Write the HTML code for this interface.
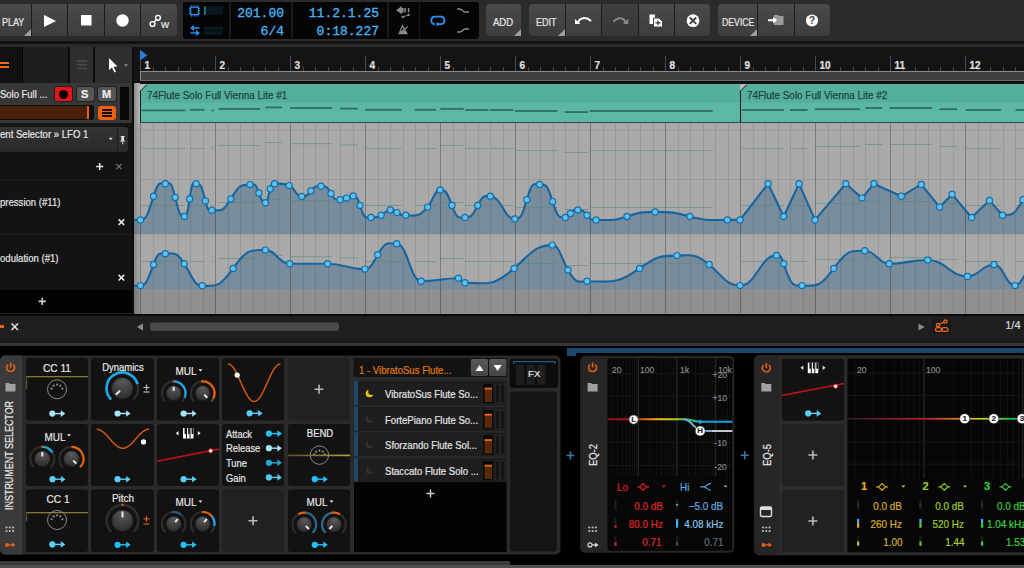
<!DOCTYPE html><html><head><meta charset="utf-8"><style>
*{margin:0;padding:0;box-sizing:border-box}
html,body{width:1024px;height:568px;overflow:hidden;background:#000;font-family:"Liberation Sans",sans-serif}
.abs{position:absolute}
.txt{position:absolute;white-space:nowrap;line-height:1;-webkit-text-stroke:0.2px currentColor}
svg{position:absolute;left:0;top:0}
</style></head><body>
<div class="abs" style="left:0px;top:0px;width:1024px;height:41px;background:#2b2b2b"></div>
<div class="abs" style="left:-4px;top:4px;width:181px;height:32px;background:linear-gradient(#4a4a4a,#3d3d3d);border-radius:4px"></div>
<div class="abs" style="left:31px;top:4px;width:1px;height:32px;background:#1c1c1c"></div>
<div class="abs" style="left:67px;top:4px;width:1px;height:32px;background:#1c1c1c"></div>
<div class="abs" style="left:104px;top:4px;width:1px;height:32px;background:#1c1c1c"></div>
<div class="abs" style="left:140px;top:4px;width:1px;height:32px;background:#1c1c1c"></div>
<div class="txt" style="left:2px;top:17.5px;font-size:10px;color:#e8e8e8;transform:scaleX(0.9);transform-origin:0 0;">PLAY</div>
<div class="abs" style="left:24px;top:29px;width:0;height:0;border-left:7px solid transparent;border-bottom:7px solid #a0a0a0"></div>
<svg style="left:0px;top:0px" width="183" height="41" viewBox="0 0 183 41"><polygon points="44,15 56,21 44,27" fill="#fff"/><rect x="81" y="15" width="10.5" height="10.5" fill="#fff"/><circle cx="122.5" cy="20.5" r="6.2" fill="#fff"/><circle cx="152.5" cy="24" r="2.4" fill="none" stroke="#fff" stroke-width="1.4"/><circle cx="158" cy="17.8" r="2.4" fill="none" stroke="#fff" stroke-width="1.4"/><line x1="154.2" y1="22.2" x2="156.3" y2="19.6" stroke="#fff" stroke-width="1.4"/></svg>
<div class="txt" style="left:160.5px;top:19.5px;font-size:9.5px;color:#f0f0f0;transform:scaleX(0.9);transform-origin:0 0;">W</div>
<div class="abs" style="left:183px;top:2px;width:296px;height:37px;background:#050505;border-radius:3px"></div>
<div class="abs" style="left:229px;top:2px;width:2px;height:37px;background:#1a1a1a"></div>
<div class="abs" style="left:291px;top:2px;width:2px;height:37px;background:#1a1a1a"></div>
<div class="abs" style="left:387px;top:2px;width:2px;height:37px;background:#1a1a1a"></div>
<div class="abs" style="left:419px;top:2px;width:1px;height:37px;background:#1a1a1a"></div>
<svg style="left:183px;top:0px" width="50" height="40" viewBox="0 0 50 40"><rect x="7.6" y="7.2" width="7.8" height="7.4" fill="none" stroke="#2a90f0" stroke-width="1.3"/><g fill="#2a90f0"><rect x="8.1" y="5.2" width="1.1" height="1.4"/><rect x="8.1" y="15.2" width="1.1" height="1.4"/><rect x="10.8" y="5.2" width="1.1" height="1.4"/><rect x="10.8" y="15.2" width="1.1" height="1.4"/><rect x="13.5" y="5.2" width="1.1" height="1.4"/><rect x="13.5" y="15.2" width="1.1" height="1.4"/><rect x="5.9" y="7.7" width="1.4" height="1.1"/><rect x="15.7" y="7.7" width="1.4" height="1.1"/><rect x="5.9" y="10.3" width="1.4" height="1.1"/><rect x="15.7" y="10.3" width="1.4" height="1.1"/><rect x="5.9" y="12.9" width="1.4" height="1.1"/><rect x="15.7" y="12.9" width="1.4" height="1.1"/></g><rect x="21" y="6.3" width="19" height="8.5" fill="#0a1820"/><rect x="21" y="6.3" width="1.8" height="8.5" fill="#237a78"/><rect x="21" y="26.4" width="19" height="3.6" fill="#0a1820"/><rect x="21" y="30.8" width="19" height="4" fill="#0a1820"/><path d="M7 28 L11 25 L11 27.2 L16.5 27.2 L16.5 28.8 L11 28.8 L11 31 Z" fill="#2a90f0"/><path d="M17 33 L13 36 L13 33.8 L7.5 33.8 L7.5 32.2 L13 32.2 L13 30 Z" fill="#2a90f0"/></svg>
<div class="txt" style="right:740px;top:6.8px;font-size:13px;color:#4ab0f0;font-family:'Liberation Mono',monospace;-webkit-text-stroke:0.35px">201.00</div>
<div class="txt" style="right:740px;top:25px;font-size:13px;color:#4ab0f0;font-family:'Liberation Mono',monospace;-webkit-text-stroke:0.35px">6/4</div>
<div class="txt" style="right:645px;top:6.8px;font-size:13px;color:#4ab0f0;font-family:'Liberation Mono',monospace;-webkit-text-stroke:0.35px">11.2.1.25</div>
<div class="txt" style="right:645px;top:25px;font-size:13px;color:#4ab0f0;font-family:'Liberation Mono',monospace;-webkit-text-stroke:0.35px">0:18.227</div>
<svg style="left:387px;top:0px" width="93" height="40" viewBox="0 0 93 40"><path d="M9.1 10.2 L14.8 6.1 L14.8 8 L16.6 8 L16.6 12.5 L14.8 12.5 L14.8 14.3 Z" fill="#8a8a8a"/><rect x="17.3" y="8" width="1.5" height="4.5" fill="#8a8a8a"/><rect x="20.8" y="8" width="1.5" height="4.5" fill="#8a8a8a"/><circle cx="15.8" cy="16.9" r="1.2" fill="#8a8a8a"/><circle cx="21.6" cy="15" r="1.2" fill="#8a8a8a"/><line x1="15.8" y1="16.9" x2="21.6" y2="15" stroke="#8a8a8a" stroke-width="0.9"/><path d="M15.4 25.6 L19.9 33.6 L12.2 33.6 Z" fill="none" stroke="#8a8a8a" stroke-width="1.2"/><path d="M13.4 30.8 L18.4 30.8 L20 33.6 L12 33.6 Z" fill="#8a8a8a"/><line x1="15.4" y1="31" x2="20.8" y2="26.4" stroke="#8a8a8a" stroke-width="1.2"/><path d="M48 24.2 L47.3 24.2 A3.9 3.9 0 0 1 47.3 16.6 L54.4 16.6 A3.9 3.9 0 0 1 54.4 24.2 L51 24.2" fill="none" stroke="#2a90f0" stroke-width="1.8"/><path d="M49.5 21.8 L53 24.2 L49.5 26.6 Z" fill="#2a90f0"/><path d="M70 9 L73 9 C75 9 76 12 78 12 L82 12" fill="none" stroke="#8a8a8a" stroke-width="1.3"/><path d="M70 32 L73 32 C75 32 76 29 78 29 L82 29" fill="none" stroke="#8a8a8a" stroke-width="1.3"/></svg>
<div class="abs" style="left:486px;top:4px;width:35px;height:32px;background:linear-gradient(#4a4a4a,#3d3d3d);border-radius:4px"></div>
<div class="txt" style="left:493px;top:17.5px;font-size:10px;color:#e8e8e8;transform:scaleX(0.95);transform-origin:0 0;">ADD</div>
<div class="abs" style="left:514px;top:29px;width:0;height:0;border-left:7px solid transparent;border-bottom:7px solid #a0a0a0"></div>
<div class="abs" style="left:529px;top:4px;width:181px;height:32px;background:linear-gradient(#4a4a4a,#3d3d3d);border-radius:4px"></div>
<div class="abs" style="left:601px;top:4px;width:37px;height:32px;background:linear-gradient(#404040,#373737)"></div>
<div class="abs" style="left:565px;top:4px;width:1px;height:32px;background:#1c1c1c"></div>
<div class="abs" style="left:601px;top:4px;width:1px;height:32px;background:#1c1c1c"></div>
<div class="abs" style="left:638px;top:4px;width:1px;height:32px;background:#1c1c1c"></div>
<div class="abs" style="left:674px;top:4px;width:1px;height:32px;background:#1c1c1c"></div>
<div class="txt" style="left:535.5px;top:17.5px;font-size:10px;color:#e8e8e8;transform:scaleX(0.9);transform-origin:0 0;">EDIT</div>
<div class="abs" style="left:558px;top:29px;width:0;height:0;border-left:7px solid transparent;border-bottom:7px solid #a0a0a0"></div>
<svg style="left:529px;top:0px" width="181" height="41" viewBox="0 0 181 41"><path d="M49 23 C50 18 57 16 62 21" fill="none" stroke="#fff" stroke-width="2"/><path d="M46 19 L51.5 24 L46 24 Z" fill="#fff"/><path d="M84.5 21.5 C89 16.5 95 17.5 96.5 22.5" fill="none" stroke="#8a8a8a" stroke-width="2"/><path d="M99.3 18.8 L94 24 L99.3 24 Z" fill="#8a8a8a"/><path d="M120.5 14.5 L126 14.5 L126 24 L120.5 24 Z" fill="#fff"/><path d="M124.5 18 L130 18 L133.5 21.5 L133.5 27 L124.5 27 Z" fill="#fff" stroke="#444" stroke-width="1"/><path d="M126.5 22.8 L131.5 22.8 M129 20.5 L129 25" stroke="#333" stroke-width="1.2"/><circle cx="164" cy="20.7" r="6.4" fill="#fff"/><path d="M160.8 17.5 L167.2 23.9 M167.2 17.5 L160.8 23.9" stroke="#3c3c3c" stroke-width="1.8"/></svg>
<div class="abs" style="left:718px;top:4px;width:112px;height:32px;background:linear-gradient(#4a4a4a,#3d3d3d);border-radius:4px"></div>
<div class="abs" style="left:757px;top:4px;width:1px;height:32px;background:#1c1c1c"></div>
<div class="abs" style="left:794px;top:4px;width:1px;height:32px;background:#1c1c1c"></div>
<div class="txt" style="left:721.5px;top:17.5px;font-size:10px;color:#e8e8e8;transform:scaleX(0.87);transform-origin:0 0;">DEVICE</div>
<div class="abs" style="left:750px;top:29px;width:0;height:0;border-left:7px solid transparent;border-bottom:7px solid #a0a0a0"></div>
<svg style="left:718px;top:0px" width="112" height="41" viewBox="0 0 112 41"><path d="M56 15 L60 15 L61 16 L65.5 16 L65.5 25 L56 25 Z" fill="#9a9a9a"/><path d="M50 19.2 L55 19.2 L55 17 L59 20.2 L55 23.4 L55 21.2 L50 21.2 Z" fill="#fff"/><circle cx="94" cy="20.5" r="6.1" fill="#fff"/><text x="94" y="24.3" font-family="Liberation Sans" font-weight="bold" font-size="10" fill="#3c3c3c" text-anchor="middle">?</text></svg>
<div class="abs" style="left:0px;top:41px;width:1024px;height:3px;background:#121212"></div>
<div class="abs" style="left:0px;top:44px;width:1024px;height:3px;background:#2a2a2a"></div>
<div class="abs" style="left:0px;top:47px;width:22px;height:36px;background:#111"></div>
<div class="abs" style="left:23px;top:47px;width:45px;height:36px;background:#1e1e1e"></div>
<div class="abs" style="left:68px;top:47px;width:2px;height:36px;background:#0c0c0c"></div>
<div class="abs" style="left:70px;top:47px;width:23px;height:36px;background:#2e2e2e"></div>
<div class="abs" style="left:93px;top:47px;width:2px;height:36px;background:#0c0c0c"></div>
<div class="abs" style="left:95px;top:47px;width:37px;height:36px;background:#2e2e2e"></div>
<div class="abs" style="left:132px;top:47px;width:2px;height:36px;background:#0c0c0c"></div>
<div class="abs" style="left:0px;top:62px;width:9px;height:2px;background:#f06a10"></div>
<div class="abs" style="left:0px;top:66px;width:9px;height:2px;background:#f06a10"></div>
<svg style="left:70px;top:47px" width="62" height="36" viewBox="0 0 62 36"><g fill="#4a4a4a"><rect x="7" y="13" width="10" height="1.8"/><rect x="7" y="16.8" width="10" height="1.8"/><rect x="7" y="20.6" width="6" height="1.8"/><path d="M14 19.8 L17.8 21.6 L14 23.4 Z"/></g><path d="M39 11 L39 23 L42 20.5 L44.5 25.5 L46 24.8 L43.5 19.8 L47.5 19.5 Z" fill="#fff"/><path d="M54 17.3 L58 17.3 L56 19.8 Z" fill="#888"/></svg>
<div class="abs" style="left:134px;top:47px;width:890px;height:36px;background:#141414"></div>
<svg style="left:0px;top:0px" width="1024" height="90" viewBox="0 0 1024 90"><rect x="140" y="56" width="1" height="15" fill="#4a4a4a"/><rect x="153" y="67" width="1" height="4" fill="#4a4a4a"/><rect x="165" y="67" width="1" height="4" fill="#4a4a4a"/><rect x="178" y="67" width="1" height="4" fill="#4a4a4a"/><rect x="190" y="67" width="1" height="4" fill="#4a4a4a"/><rect x="203" y="67" width="1" height="4" fill="#4a4a4a"/><rect x="215" y="56" width="1" height="15" fill="#4a4a4a"/><rect x="228" y="67" width="1" height="4" fill="#4a4a4a"/><rect x="240" y="67" width="1" height="4" fill="#4a4a4a"/><rect x="253" y="67" width="1" height="4" fill="#4a4a4a"/><rect x="265" y="67" width="1" height="4" fill="#4a4a4a"/><rect x="278" y="67" width="1" height="4" fill="#4a4a4a"/><rect x="290" y="56" width="1" height="15" fill="#4a4a4a"/><rect x="303" y="67" width="1" height="4" fill="#4a4a4a"/><rect x="315" y="67" width="1" height="4" fill="#4a4a4a"/><rect x="328" y="67" width="1" height="4" fill="#4a4a4a"/><rect x="340" y="67" width="1" height="4" fill="#4a4a4a"/><rect x="353" y="67" width="1" height="4" fill="#4a4a4a"/><rect x="365" y="56" width="1" height="15" fill="#4a4a4a"/><rect x="378" y="67" width="1" height="4" fill="#4a4a4a"/><rect x="390" y="67" width="1" height="4" fill="#4a4a4a"/><rect x="403" y="67" width="1" height="4" fill="#4a4a4a"/><rect x="415" y="67" width="1" height="4" fill="#4a4a4a"/><rect x="428" y="67" width="1" height="4" fill="#4a4a4a"/><rect x="440" y="56" width="1" height="15" fill="#4a4a4a"/><rect x="453" y="67" width="1" height="4" fill="#4a4a4a"/><rect x="465" y="67" width="1" height="4" fill="#4a4a4a"/><rect x="478" y="67" width="1" height="4" fill="#4a4a4a"/><rect x="490" y="67" width="1" height="4" fill="#4a4a4a"/><rect x="503" y="67" width="1" height="4" fill="#4a4a4a"/><rect x="515" y="56" width="1" height="15" fill="#4a4a4a"/><rect x="528" y="67" width="1" height="4" fill="#4a4a4a"/><rect x="540" y="67" width="1" height="4" fill="#4a4a4a"/><rect x="553" y="67" width="1" height="4" fill="#4a4a4a"/><rect x="565" y="67" width="1" height="4" fill="#4a4a4a"/><rect x="578" y="67" width="1" height="4" fill="#4a4a4a"/><rect x="590" y="56" width="1" height="15" fill="#4a4a4a"/><rect x="603" y="67" width="1" height="4" fill="#4a4a4a"/><rect x="615" y="67" width="1" height="4" fill="#4a4a4a"/><rect x="628" y="67" width="1" height="4" fill="#4a4a4a"/><rect x="640" y="67" width="1" height="4" fill="#4a4a4a"/><rect x="653" y="67" width="1" height="4" fill="#4a4a4a"/><rect x="665" y="56" width="1" height="15" fill="#4a4a4a"/><rect x="678" y="67" width="1" height="4" fill="#4a4a4a"/><rect x="690" y="67" width="1" height="4" fill="#4a4a4a"/><rect x="703" y="67" width="1" height="4" fill="#4a4a4a"/><rect x="715" y="67" width="1" height="4" fill="#4a4a4a"/><rect x="728" y="67" width="1" height="4" fill="#4a4a4a"/><rect x="740" y="56" width="1" height="15" fill="#4a4a4a"/><rect x="753" y="67" width="1" height="4" fill="#4a4a4a"/><rect x="765" y="67" width="1" height="4" fill="#4a4a4a"/><rect x="778" y="67" width="1" height="4" fill="#4a4a4a"/><rect x="790" y="67" width="1" height="4" fill="#4a4a4a"/><rect x="803" y="67" width="1" height="4" fill="#4a4a4a"/><rect x="815" y="56" width="1" height="15" fill="#4a4a4a"/><rect x="828" y="67" width="1" height="4" fill="#4a4a4a"/><rect x="840" y="67" width="1" height="4" fill="#4a4a4a"/><rect x="853" y="67" width="1" height="4" fill="#4a4a4a"/><rect x="865" y="67" width="1" height="4" fill="#4a4a4a"/><rect x="878" y="67" width="1" height="4" fill="#4a4a4a"/><rect x="890" y="56" width="1" height="15" fill="#4a4a4a"/><rect x="903" y="67" width="1" height="4" fill="#4a4a4a"/><rect x="915" y="67" width="1" height="4" fill="#4a4a4a"/><rect x="928" y="67" width="1" height="4" fill="#4a4a4a"/><rect x="940" y="67" width="1" height="4" fill="#4a4a4a"/><rect x="953" y="67" width="1" height="4" fill="#4a4a4a"/><rect x="965" y="56" width="1" height="15" fill="#4a4a4a"/><rect x="978" y="67" width="1" height="4" fill="#4a4a4a"/><rect x="990" y="67" width="1" height="4" fill="#4a4a4a"/><rect x="1003" y="67" width="1" height="4" fill="#4a4a4a"/><rect x="1015" y="67" width="1" height="4" fill="#4a4a4a"/><rect x="140" y="71" width="884" height="10" fill="#404040"/><rect x="140" y="71" width="884" height="1" fill="#8a8a8a"/><rect x="140" y="71" width="1" height="10" fill="#8a8a8a"/><rect x="140" y="80" width="884" height="1" fill="#6a6a6a"/><path d="M140 50 L147.5 55.3 L140 60.6 Z" fill="#2a7ce0"/></svg>
<div class="txt" style="left:144.5px;top:61px;font-size:10px;color:#e0e0e0;font-weight:bold">1</div>
<div class="txt" style="left:219.5px;top:61px;font-size:10px;color:#e0e0e0;font-weight:bold">2</div>
<div class="txt" style="left:294.5px;top:61px;font-size:10px;color:#e0e0e0;font-weight:bold">3</div>
<div class="txt" style="left:369.5px;top:61px;font-size:10px;color:#e0e0e0;font-weight:bold">4</div>
<div class="txt" style="left:444.5px;top:61px;font-size:10px;color:#e0e0e0;font-weight:bold">5</div>
<div class="txt" style="left:519.5px;top:61px;font-size:10px;color:#e0e0e0;font-weight:bold">6</div>
<div class="txt" style="left:594.5px;top:61px;font-size:10px;color:#e0e0e0;font-weight:bold">7</div>
<div class="txt" style="left:669.5px;top:61px;font-size:10px;color:#e0e0e0;font-weight:bold">8</div>
<div class="txt" style="left:744.5px;top:61px;font-size:10px;color:#e0e0e0;font-weight:bold">9</div>
<div class="txt" style="left:819.5px;top:61px;font-size:10px;color:#e0e0e0;font-weight:bold">10</div>
<div class="txt" style="left:894.5px;top:61px;font-size:10px;color:#e0e0e0;font-weight:bold">11</div>
<div class="txt" style="left:969.5px;top:61px;font-size:10px;color:#e0e0e0;font-weight:bold">12</div>
<div class="abs" style="left:134px;top:81px;width:890px;height:3px;background:#0c0c0c"></div>
<div class="abs" style="left:0px;top:83px;width:132px;height:40px;background:#373737"></div>
<div class="abs" style="left:132px;top:83px;width:2px;height:40px;background:#0c0c0c"></div>
<div class="txt" style="left:0px;top:89px;font-size:11px;color:#e6e6e6;transform:scaleX(0.86);transform-origin:0 0;">Solo Full ...</div>
<div class="abs" style="left:55px;top:87px;width:17px;height:14px;background:#e8141c;border-radius:2px;box-shadow:0 0 0 1px #222"></div>
<div class="abs" style="left:59px;top:89.5px;width:9px;height:9px;border-radius:50%;background:#000"></div>
<div class="abs" style="left:77px;top:87px;width:17px;height:14px;background:#555;border-radius:2px;box-shadow:0 0 0 1px #222"></div>
<div class="abs" style="left:98px;top:87px;width:18px;height:14px;background:#555;border-radius:2px;box-shadow:0 0 0 1px #222"></div>
<div class="txt" style="left:81px;top:89px;font-size:11px;color:#eee;font-weight:bold">S</div>
<div class="txt" style="left:102px;top:89px;font-size:11px;color:#eee;font-weight:bold">M</div>
<div class="abs" style="left:120px;top:87px;width:9px;height:33px;background:#080808"></div>
<div class="abs" style="left:0px;top:105px;width:94px;height:15px;background:#0a0a0a;border-radius:0 3px 3px 0"></div>
<div class="abs" style="left:0px;top:106px;width:88px;height:13px;background:#4a2008"></div>
<div class="abs" style="left:87px;top:106px;width:1.5px;height:13px;background:#e86010"></div>
<div class="abs" style="left:98px;top:106px;width:18px;height:14px;background:#f06010;border-radius:3px"></div>
<div class="abs" style="left:102px;top:109px;width:10px;height:1.6px;background:#111"></div>
<div class="abs" style="left:102px;top:112px;width:10px;height:1.6px;background:#111"></div>
<div class="abs" style="left:102px;top:115px;width:10px;height:1.6px;background:#111"></div>
<div class="abs" style="left:134px;top:83px;width:6px;height:40px;background:linear-gradient(90deg,#8a8a8a,#b8b8b8)"></div>
<svg style="left:0px;top:0px" width="1024" height="130" viewBox="0 0 1024 130"><rect x="140" y="82" width="884" height="2" fill="#111"/><polygon points="140,84 147,84 140,91" fill="#b8b8b8"/><polygon points="140,91 147,84 740,84 740,122 140,122" fill="#5cb8a3"/><rect x="140" y="84" width="600" height="19" fill="#55b09b" clip-path="none"/><polygon points="140,84 147,84 140,91" fill="#b8b8b8"/><line x1="140.5" y1="91" x2="140.5" y2="122" stroke="#1a1a1a" stroke-width="1"/><line x1="140" y1="91.5" x2="147" y2="84.5" stroke="#1a1a1a" stroke-width="1"/><rect x="141.5" y="109.5" width="43.9" height="1.8" fill="#2e6e60"/><rect x="189.8" y="108.9" width="14.7" height="1.8" fill="#2e6e60"/><rect x="211.8" y="109.5" width="2.0" height="1.8" fill="#2e6e60"/><rect x="218.5" y="108.0" width="41.6" height="1.8" fill="#2e6e60"/><rect x="265.4" y="106.5" width="16.7" height="1.8" fill="#2e6e60"/><rect x="290" y="107.1" width="42.0" height="1.8" fill="#2e6e60"/><rect x="340.1" y="107.7" width="17.6" height="1.8" fill="#2e6e60"/><rect x="365" y="108.9" width="36.6" height="1.8" fill="#2e6e60"/><rect x="414.5" y="108.9" width="21.5" height="1.8" fill="#2e6e60"/><rect x="440.3" y="108.0" width="23.4" height="1.8" fill="#2e6e60"/><rect x="465.2" y="109.1" width="23.4" height="1.8" fill="#2e6e60"/><rect x="490" y="109.1" width="23.5" height="1.8" fill="#2e6e60"/><rect x="515" y="110.1" width="42.5" height="1.8" fill="#2e6e60"/><rect x="564.8" y="111.2" width="23.4" height="1.8" fill="#2e6e60"/><rect x="589.7" y="110.1" width="123.0" height="1.8" fill="#2e6e60"/><polygon points="740,84 747,84 740,91" fill="#b8b8b8"/><polygon points="740,91 747,84 1024,84 1024,122 740,122" fill="#5cb8a3"/><rect x="740" y="84" width="284" height="19" fill="#55b09b" clip-path="none"/><polygon points="740,84 747,84 740,91" fill="#b8b8b8"/><line x1="740.5" y1="91" x2="740.5" y2="122" stroke="#1a1a1a" stroke-width="1"/><line x1="740" y1="91.5" x2="747" y2="84.5" stroke="#1a1a1a" stroke-width="1"/><rect x="741.6" y="109.1" width="42.4" height="1.8" fill="#2e6e60"/><rect x="790" y="109.1" width="17.5" height="1.8" fill="#2e6e60"/><rect x="814.8" y="108.3" width="45.4" height="1.8" fill="#2e6e60"/><rect x="865.2" y="107.1" width="17.0" height="1.8" fill="#2e6e60"/><rect x="889.5" y="107.1" width="42.5" height="1.8" fill="#2e6e60"/><rect x="939.4" y="108.3" width="17.6" height="1.8" fill="#2e6e60"/><rect x="965.7" y="109.1" width="35.2" height="1.8" fill="#2e6e60"/><rect x="1015.5" y="109.1" width="8.5" height="1.8" fill="#2e6e60"/><rect x="140" y="122" width="884" height="1" fill="#2a4a44"/></svg>
<div class="txt" style="left:147px;top:90px;font-size:11px;color:#1b4640;transform:scaleX(0.9);transform-origin:0 0;-webkit-text-stroke:0.25px #1b4640">74Flute Solo Full Vienna Lite #1</div>
<div class="txt" style="left:747px;top:90px;font-size:11px;color:#1b4640;transform:scaleX(0.9);transform-origin:0 0;-webkit-text-stroke:0.25px #1b4640">74Flute Solo Full Vienna Lite #2</div>
<div class="abs" style="left:0px;top:123px;width:132px;height:3.5px;background:#151515"></div>
<div class="abs" style="left:0px;top:126.5px;width:132px;height:163.5px;background:#131313"></div>
<div class="abs" style="left:0px;top:126.5px;width:128px;height:25.5px;background:linear-gradient(#343434,#2a2a2a);border-radius:0 3px 3px 0"></div>
<div class="abs" style="left:116.5px;top:126.5px;width:1px;height:25.5px;background:#1e1e1e"></div>
<div class="txt" style="left:0px;top:128.5px;font-size:11px;color:#e6e6e6;transform:scaleX(0.87);transform-origin:0 0;">ent Selector &raquo; LFO 1</div>
<div class="abs" style="left:0px;top:179.5px;width:132px;height:1px;background:#1d1d1d"></div>
<div class="abs" style="left:0px;top:234px;width:132px;height:1px;background:#1d1d1d"></div>
<div class="abs" style="left:0px;top:290px;width:132px;height:23.5px;background:#030303"></div>
<div class="abs" style="left:0px;top:313px;width:132px;height:1px;background:#202020"></div>
<div class="txt" style="left:0px;top:196.5px;font-size:11px;color:#e6e6e6;transform:scaleX(0.87);transform-origin:0 0;">pression (#11)</div>
<div class="txt" style="left:0px;top:252.5px;font-size:11px;color:#e6e6e6;transform:scaleX(0.87);transform-origin:0 0;">odulation (#1)</div>
<svg style="left:0px;top:120px" width="134" height="200" viewBox="0 0 134 200"><path d="M108.7 17.8 L112.8 17.8 L110.75 20.3 Z" fill="#ddd"/><path d="M120.3 16 L125 16 L124 17.3 L124 20 L125.6 21.5 L119.7 21.5 L121.3 20 L121.3 17.3 Z" fill="#ddd"/><rect x="122.2" y="21.5" width="1" height="2.7" fill="#ddd"/><path d="M96.2 46.5 L103.2 46.5 M99.7 43 L99.7 50" stroke="#eee" stroke-width="1.5"/><path d="M116.2 43.8 L121.6 49.2 M121.6 43.8 L116.2 49.2" stroke="#777" stroke-width="1.2"/><path d="M118.6 99.4 L124.2 105 M124.2 99.4 L118.6 105" stroke="#eee" stroke-width="1.5"/><path d="M118.6 154.9 L124.2 160.5 M124.2 154.9 L118.6 160.5" stroke="#eee" stroke-width="1.5"/><path d="M38.5 181.4 L45.8 181.4 M42.15 177.8 L42.15 185" stroke="#ccc" stroke-width="1.6"/></svg>
<div class="abs" style="left:132px;top:123px;width:2px;height:192px;background:#0c0c0c"></div>
<svg style="left:0px;top:0px" width="1024" height="320" viewBox="0 0 1024 320"><defs><linearGradient id="gut" x1="0" x2="1"><stop offset="0" stop-color="#8c8c8c"/><stop offset="1" stop-color="#a8a8a8"/></linearGradient><clipPath id="gc"><rect x="134" y="123" width="890" height="191"/></clipPath></defs><rect x="140" y="123" width="884" height="191" fill="#a9a9a9"/><rect x="134" y="123" width="6" height="191" fill="url(#gut)"/><rect x="134" y="289.5" width="890" height="25" fill="#000" fill-opacity="0.15"/><g clip-path="url(#gc)"><path d="M134.0 219.9 C136.9 219.9 137.5 219.9 140.4 219.9 C146.3 219.9 147.6 215.2 153.5 196.3 C158.8 179.3 160.0 183.7 165.3 183.7 C169.8 183.7 170.7 178.9 175.2 197.5 C179.3 214.6 180.2 216.5 184.3 216.5 C186.7 216.5 187.2 215.3 189.6 199.0 C192.6 178.6 193.2 183.7 196.2 183.7 C200.3 183.7 201.3 184.0 205.4 200.9 C208.3 212.7 208.9 210.3 211.8 210.3 C220.4 210.3 222.2 213.2 230.8 199.0 C239.4 184.7 241.4 184.6 250.0 184.6 C254.0 184.6 254.9 181.7 258.9 192.9 C261.8 201.1 262.5 202.7 265.4 202.7 C267.6 202.7 268.0 197.0 270.2 189.0 C272.1 181.8 272.6 183.7 274.5 183.7 C281.1 183.7 282.5 183.0 289.1 185.6 C294.8 187.8 296.0 196.5 301.7 196.5 C305.8 196.5 306.8 196.4 310.9 191.0 C315.4 185.0 316.5 186.3 321.0 186.3 C325.5 186.3 326.5 185.5 331.0 193.4 C335.1 200.6 336.0 199.7 340.1 199.7 C343.0 199.7 343.6 200.1 346.5 198.1 C349.5 196.0 350.2 195.9 353.2 195.9 C356.3 195.9 356.9 196.0 360.0 205.5 C364.9 220.8 366.1 217.4 371.0 217.4 C375.5 217.4 376.6 218.1 381.1 215.3 C385.2 212.7 386.2 210.0 390.3 210.0 C393.3 210.0 393.9 210.0 396.9 212.6 C400.9 216.1 401.8 215.3 405.8 215.3 C415.6 215.3 417.8 218.2 427.6 207.1 C433.2 200.8 434.5 189.9 440.1 189.9 C445.5 189.9 446.6 191.0 452.0 205.5 C457.8 221.3 459.1 217.4 464.9 217.4 C470.7 217.4 471.9 217.3 477.7 205.5 C483.4 193.9 484.6 196.3 490.3 196.3 C501.3 196.3 503.8 219.0 514.8 219.0 C520.2 219.0 521.4 218.2 526.8 199.7 C532.6 179.9 533.8 184.4 539.6 184.4 C545.5 184.4 546.8 182.8 552.6 201.6 C558.3 219.8 559.5 217.4 565.2 217.4 C567.6 217.4 568.1 216.9 570.5 213.5 C573.8 208.8 574.5 210.0 577.8 210.0 C581.9 210.0 582.9 209.7 587.0 215.3 C591.1 220.8 592.0 219.9 596.1 219.9 C610.0 219.9 613.1 221.1 627.0 216.5 C639.6 212.3 642.5 211.9 655.1 211.9 C670.8 211.9 674.2 212.3 689.9 216.5 C706.8 221.0 710.5 219.9 727.4 219.9 C733.1 219.9 734.3 219.9 740.0 219.9 L768.1 183.7 L783.7 216.5 L799.0 183.7 L815.0 219.9 L845.8 183.7 L862.0 198.1 L873.9 183.7 L901.3 196.3 L921.3 184.4 L939.6 207.1 L952.1 194.3 L971.6 217.4 L989.4 200.4 L1002.5 215.3 C1011.7 215.3 1013.8 216.0 1023.0 199.7 C1026.2 194.1 1026.8 195.0 1030.0 195.0 L1030 234.2 L134 234.2 Z" fill="#35658a" fill-opacity="0.42"/><path d="M134.0 285.6 C136.9 285.6 137.5 285.6 140.4 285.6 C146.3 285.6 147.6 280.5 153.5 264.5 C158.8 250.1 160.0 253.8 165.3 253.8 C173.9 253.8 175.8 250.3 184.3 263.8 C192.4 276.5 194.1 285.8 202.2 285.8 C216.1 285.8 219.2 288.0 233.1 268.4 C247.6 247.9 250.9 250.1 265.4 250.1 C276.3 250.1 278.7 263.8 289.6 263.8 C306.7 263.8 310.4 263.8 327.5 263.8 C344.3 263.8 348.1 269.1 364.9 269.1 C370.7 269.1 371.9 264.7 377.7 254.7 C386.2 239.8 388.1 243.7 396.7 243.7 C407.7 243.7 410.1 281.2 421.1 281.2 C437.9 281.2 441.6 278.2 458.4 278.2 C461.3 278.2 462.0 282.8 464.9 282.8 C487.0 282.8 492.0 287.8 514.1 268.4 C531.2 253.3 535.1 245.1 552.2 245.1 C559.3 245.1 560.9 257.4 568.0 270.0 C576.5 285.1 578.5 281.2 587.0 281.2 C610.7 281.2 615.9 285.4 639.6 268.4 C656.4 256.3 660.1 255.6 676.9 255.6 C691.4 255.6 694.6 252.5 709.1 264.5 C723.0 276.0 726.1 285.6 740.0 285.6 C756.5 285.6 760.1 255.4 776.6 255.4 C779.8 255.4 780.5 254.3 783.7 263.8 C791.9 288.2 793.8 285.6 802.0 285.6 C816.3 285.6 819.5 288.2 833.8 268.4 C847.8 249.1 850.8 250.8 864.8 250.8 C875.8 250.8 878.2 263.8 889.2 263.8 C906.5 263.8 910.4 260.0 927.7 260.0 C945.6 260.0 949.6 276.4 967.5 276.4 C979.4 276.4 982.1 264.5 994.0 264.5 C1003.5 264.5 1005.6 285.6 1015.1 285.6 C1021.8 285.6 1023.3 272.0 1030.0 272.0 L1030 289.5 L134 289.5 Z" fill="#35658a" fill-opacity="0.42"/><rect x="140" y="123" width="1" height="191" fill="#000" fill-opacity="0.28"/><rect x="153" y="123" width="1" height="191" fill="#000" fill-opacity="0.09"/><rect x="165" y="123" width="1" height="191" fill="#000" fill-opacity="0.09"/><rect x="178" y="123" width="1" height="191" fill="#000" fill-opacity="0.09"/><rect x="190" y="123" width="1" height="191" fill="#000" fill-opacity="0.09"/><rect x="203" y="123" width="1" height="191" fill="#000" fill-opacity="0.09"/><rect x="215" y="123" width="1" height="191" fill="#000" fill-opacity="0.28"/><rect x="228" y="123" width="1" height="191" fill="#000" fill-opacity="0.09"/><rect x="240" y="123" width="1" height="191" fill="#000" fill-opacity="0.09"/><rect x="253" y="123" width="1" height="191" fill="#000" fill-opacity="0.09"/><rect x="265" y="123" width="1" height="191" fill="#000" fill-opacity="0.09"/><rect x="278" y="123" width="1" height="191" fill="#000" fill-opacity="0.09"/><rect x="290" y="123" width="1" height="191" fill="#000" fill-opacity="0.28"/><rect x="303" y="123" width="1" height="191" fill="#000" fill-opacity="0.09"/><rect x="315" y="123" width="1" height="191" fill="#000" fill-opacity="0.09"/><rect x="328" y="123" width="1" height="191" fill="#000" fill-opacity="0.09"/><rect x="340" y="123" width="1" height="191" fill="#000" fill-opacity="0.09"/><rect x="353" y="123" width="1" height="191" fill="#000" fill-opacity="0.09"/><rect x="365" y="123" width="1" height="191" fill="#000" fill-opacity="0.28"/><rect x="378" y="123" width="1" height="191" fill="#000" fill-opacity="0.09"/><rect x="390" y="123" width="1" height="191" fill="#000" fill-opacity="0.09"/><rect x="403" y="123" width="1" height="191" fill="#000" fill-opacity="0.09"/><rect x="415" y="123" width="1" height="191" fill="#000" fill-opacity="0.09"/><rect x="428" y="123" width="1" height="191" fill="#000" fill-opacity="0.09"/><rect x="440" y="123" width="1" height="191" fill="#000" fill-opacity="0.28"/><rect x="453" y="123" width="1" height="191" fill="#000" fill-opacity="0.09"/><rect x="465" y="123" width="1" height="191" fill="#000" fill-opacity="0.09"/><rect x="478" y="123" width="1" height="191" fill="#000" fill-opacity="0.09"/><rect x="490" y="123" width="1" height="191" fill="#000" fill-opacity="0.09"/><rect x="503" y="123" width="1" height="191" fill="#000" fill-opacity="0.09"/><rect x="515" y="123" width="1" height="191" fill="#000" fill-opacity="0.28"/><rect x="528" y="123" width="1" height="191" fill="#000" fill-opacity="0.09"/><rect x="540" y="123" width="1" height="191" fill="#000" fill-opacity="0.09"/><rect x="553" y="123" width="1" height="191" fill="#000" fill-opacity="0.09"/><rect x="565" y="123" width="1" height="191" fill="#000" fill-opacity="0.09"/><rect x="578" y="123" width="1" height="191" fill="#000" fill-opacity="0.09"/><rect x="590" y="123" width="1" height="191" fill="#000" fill-opacity="0.28"/><rect x="603" y="123" width="1" height="191" fill="#000" fill-opacity="0.09"/><rect x="615" y="123" width="1" height="191" fill="#000" fill-opacity="0.09"/><rect x="628" y="123" width="1" height="191" fill="#000" fill-opacity="0.09"/><rect x="640" y="123" width="1" height="191" fill="#000" fill-opacity="0.09"/><rect x="653" y="123" width="1" height="191" fill="#000" fill-opacity="0.09"/><rect x="665" y="123" width="1" height="191" fill="#000" fill-opacity="0.28"/><rect x="678" y="123" width="1" height="191" fill="#000" fill-opacity="0.09"/><rect x="690" y="123" width="1" height="191" fill="#000" fill-opacity="0.09"/><rect x="703" y="123" width="1" height="191" fill="#000" fill-opacity="0.09"/><rect x="715" y="123" width="1" height="191" fill="#000" fill-opacity="0.09"/><rect x="728" y="123" width="1" height="191" fill="#000" fill-opacity="0.09"/><rect x="740" y="123" width="1" height="191" fill="#000" fill-opacity="0.28"/><rect x="753" y="123" width="1" height="191" fill="#000" fill-opacity="0.09"/><rect x="765" y="123" width="1" height="191" fill="#000" fill-opacity="0.09"/><rect x="778" y="123" width="1" height="191" fill="#000" fill-opacity="0.09"/><rect x="790" y="123" width="1" height="191" fill="#000" fill-opacity="0.09"/><rect x="803" y="123" width="1" height="191" fill="#000" fill-opacity="0.09"/><rect x="815" y="123" width="1" height="191" fill="#000" fill-opacity="0.28"/><rect x="828" y="123" width="1" height="191" fill="#000" fill-opacity="0.09"/><rect x="840" y="123" width="1" height="191" fill="#000" fill-opacity="0.09"/><rect x="853" y="123" width="1" height="191" fill="#000" fill-opacity="0.09"/><rect x="865" y="123" width="1" height="191" fill="#000" fill-opacity="0.09"/><rect x="878" y="123" width="1" height="191" fill="#000" fill-opacity="0.09"/><rect x="890" y="123" width="1" height="191" fill="#000" fill-opacity="0.28"/><rect x="903" y="123" width="1" height="191" fill="#000" fill-opacity="0.09"/><rect x="915" y="123" width="1" height="191" fill="#000" fill-opacity="0.09"/><rect x="928" y="123" width="1" height="191" fill="#000" fill-opacity="0.09"/><rect x="940" y="123" width="1" height="191" fill="#000" fill-opacity="0.09"/><rect x="953" y="123" width="1" height="191" fill="#000" fill-opacity="0.09"/><rect x="965" y="123" width="1" height="191" fill="#000" fill-opacity="0.28"/><rect x="978" y="123" width="1" height="191" fill="#000" fill-opacity="0.09"/><rect x="990" y="123" width="1" height="191" fill="#000" fill-opacity="0.09"/><rect x="1003" y="123" width="1" height="191" fill="#000" fill-opacity="0.09"/><rect x="1015" y="123" width="1" height="191" fill="#000" fill-opacity="0.09"/><rect x="140" y="179" width="884" height="1" fill="#000" fill-opacity="0.08"/><rect x="140" y="129.3" width="884" height="1" fill="#203040" fill-opacity="0.12"/><rect x="141.5" y="148.0" width="43.9" height="1" fill="#4f8a7a" fill-opacity="0.55"/><rect x="141.5" y="205.0" width="43.9" height="1" fill="#4f8a7a" fill-opacity="0.55"/><rect x="141.5" y="261.0" width="43.9" height="1" fill="#4f8a7a" fill-opacity="0.55"/><rect x="189.8" y="148.0" width="14.7" height="1" fill="#4f8a7a" fill-opacity="0.55"/><rect x="189.8" y="205.0" width="14.7" height="1" fill="#4f8a7a" fill-opacity="0.55"/><rect x="189.8" y="261.0" width="14.7" height="1" fill="#4f8a7a" fill-opacity="0.55"/><rect x="211.8" y="148.0" width="2.0" height="1" fill="#4f8a7a" fill-opacity="0.55"/><rect x="211.8" y="205.0" width="2.0" height="1" fill="#4f8a7a" fill-opacity="0.55"/><rect x="211.8" y="261.0" width="2.0" height="1" fill="#4f8a7a" fill-opacity="0.55"/><rect x="218.5" y="145.0" width="41.6" height="1" fill="#4f8a7a" fill-opacity="0.55"/><rect x="218.5" y="202.0" width="41.6" height="1" fill="#4f8a7a" fill-opacity="0.55"/><rect x="218.5" y="258.0" width="41.6" height="1" fill="#4f8a7a" fill-opacity="0.55"/><rect x="265.4" y="142.0" width="16.7" height="1" fill="#4f8a7a" fill-opacity="0.55"/><rect x="265.4" y="199.0" width="16.7" height="1" fill="#4f8a7a" fill-opacity="0.55"/><rect x="265.4" y="255.0" width="16.7" height="1" fill="#4f8a7a" fill-opacity="0.55"/><rect x="290" y="143.2" width="42.0" height="1" fill="#4f8a7a" fill-opacity="0.55"/><rect x="290" y="200.2" width="42.0" height="1" fill="#4f8a7a" fill-opacity="0.55"/><rect x="290" y="256.2" width="42.0" height="1" fill="#4f8a7a" fill-opacity="0.55"/><rect x="340.1" y="144.4" width="17.6" height="1" fill="#4f8a7a" fill-opacity="0.55"/><rect x="340.1" y="201.4" width="17.6" height="1" fill="#4f8a7a" fill-opacity="0.55"/><rect x="340.1" y="257.4" width="17.6" height="1" fill="#4f8a7a" fill-opacity="0.55"/><rect x="365" y="148.0" width="36.6" height="1" fill="#4f8a7a" fill-opacity="0.55"/><rect x="365" y="205.0" width="36.6" height="1" fill="#4f8a7a" fill-opacity="0.55"/><rect x="365" y="261.0" width="36.6" height="1" fill="#4f8a7a" fill-opacity="0.55"/><rect x="414.5" y="148.0" width="21.5" height="1" fill="#4f8a7a" fill-opacity="0.55"/><rect x="414.5" y="205.0" width="21.5" height="1" fill="#4f8a7a" fill-opacity="0.55"/><rect x="414.5" y="261.0" width="21.5" height="1" fill="#4f8a7a" fill-opacity="0.55"/><rect x="440.3" y="145.0" width="23.4" height="1" fill="#4f8a7a" fill-opacity="0.55"/><rect x="440.3" y="202.0" width="23.4" height="1" fill="#4f8a7a" fill-opacity="0.55"/><rect x="440.3" y="258.0" width="23.4" height="1" fill="#4f8a7a" fill-opacity="0.55"/><rect x="465.2" y="148.0" width="23.4" height="1" fill="#4f8a7a" fill-opacity="0.55"/><rect x="465.2" y="205.0" width="23.4" height="1" fill="#4f8a7a" fill-opacity="0.55"/><rect x="465.2" y="261.0" width="23.4" height="1" fill="#4f8a7a" fill-opacity="0.55"/><rect x="490" y="148.0" width="23.5" height="1" fill="#4f8a7a" fill-opacity="0.55"/><rect x="490" y="205.0" width="23.5" height="1" fill="#4f8a7a" fill-opacity="0.55"/><rect x="490" y="261.0" width="23.5" height="1" fill="#4f8a7a" fill-opacity="0.55"/><rect x="515" y="150.0" width="42.5" height="1" fill="#4f8a7a" fill-opacity="0.55"/><rect x="515" y="207.0" width="42.5" height="1" fill="#4f8a7a" fill-opacity="0.55"/><rect x="515" y="263.0" width="42.5" height="1" fill="#4f8a7a" fill-opacity="0.55"/><rect x="564.8" y="152.0" width="23.4" height="1" fill="#4f8a7a" fill-opacity="0.55"/><rect x="564.8" y="209.0" width="23.4" height="1" fill="#4f8a7a" fill-opacity="0.55"/><rect x="564.8" y="265.0" width="23.4" height="1" fill="#4f8a7a" fill-opacity="0.55"/><rect x="589.7" y="150.0" width="123.0" height="1" fill="#4f8a7a" fill-opacity="0.55"/><rect x="589.7" y="207.0" width="123.0" height="1" fill="#4f8a7a" fill-opacity="0.55"/><rect x="589.7" y="263.0" width="123.0" height="1" fill="#4f8a7a" fill-opacity="0.55"/><rect x="741.6" y="148.0" width="42.4" height="1" fill="#4f8a7a" fill-opacity="0.55"/><rect x="741.6" y="205.0" width="42.4" height="1" fill="#4f8a7a" fill-opacity="0.55"/><rect x="741.6" y="261.0" width="42.4" height="1" fill="#4f8a7a" fill-opacity="0.55"/><rect x="790" y="148.0" width="17.5" height="1" fill="#4f8a7a" fill-opacity="0.55"/><rect x="790" y="205.0" width="17.5" height="1" fill="#4f8a7a" fill-opacity="0.55"/><rect x="790" y="261.0" width="17.5" height="1" fill="#4f8a7a" fill-opacity="0.55"/><rect x="814.8" y="146.0" width="45.4" height="1" fill="#4f8a7a" fill-opacity="0.55"/><rect x="814.8" y="203.0" width="45.4" height="1" fill="#4f8a7a" fill-opacity="0.55"/><rect x="814.8" y="259.0" width="45.4" height="1" fill="#4f8a7a" fill-opacity="0.55"/><rect x="865.2" y="144.0" width="17.0" height="1" fill="#4f8a7a" fill-opacity="0.55"/><rect x="865.2" y="201.0" width="17.0" height="1" fill="#4f8a7a" fill-opacity="0.55"/><rect x="865.2" y="257.0" width="17.0" height="1" fill="#4f8a7a" fill-opacity="0.55"/><rect x="889.5" y="144.0" width="42.5" height="1" fill="#4f8a7a" fill-opacity="0.55"/><rect x="889.5" y="201.0" width="42.5" height="1" fill="#4f8a7a" fill-opacity="0.55"/><rect x="889.5" y="257.0" width="42.5" height="1" fill="#4f8a7a" fill-opacity="0.55"/><rect x="939.4" y="146.0" width="17.6" height="1" fill="#4f8a7a" fill-opacity="0.55"/><rect x="939.4" y="203.0" width="17.6" height="1" fill="#4f8a7a" fill-opacity="0.55"/><rect x="939.4" y="259.0" width="17.6" height="1" fill="#4f8a7a" fill-opacity="0.55"/><rect x="965.7" y="148.0" width="35.2" height="1" fill="#4f8a7a" fill-opacity="0.55"/><rect x="965.7" y="205.0" width="35.2" height="1" fill="#4f8a7a" fill-opacity="0.55"/><rect x="965.7" y="261.0" width="35.2" height="1" fill="#4f8a7a" fill-opacity="0.55"/><rect x="1015.5" y="148.0" width="8.5" height="1" fill="#4f8a7a" fill-opacity="0.55"/><rect x="1015.5" y="205.0" width="8.5" height="1" fill="#4f8a7a" fill-opacity="0.55"/><rect x="1015.5" y="261.0" width="8.5" height="1" fill="#4f8a7a" fill-opacity="0.55"/><path d="M134.0 219.9 C136.9 219.9 137.5 219.9 140.4 219.9 C146.3 219.9 147.6 215.2 153.5 196.3 C158.8 179.3 160.0 183.7 165.3 183.7 C169.8 183.7 170.7 178.9 175.2 197.5 C179.3 214.6 180.2 216.5 184.3 216.5 C186.7 216.5 187.2 215.3 189.6 199.0 C192.6 178.6 193.2 183.7 196.2 183.7 C200.3 183.7 201.3 184.0 205.4 200.9 C208.3 212.7 208.9 210.3 211.8 210.3 C220.4 210.3 222.2 213.2 230.8 199.0 C239.4 184.7 241.4 184.6 250.0 184.6 C254.0 184.6 254.9 181.7 258.9 192.9 C261.8 201.1 262.5 202.7 265.4 202.7 C267.6 202.7 268.0 197.0 270.2 189.0 C272.1 181.8 272.6 183.7 274.5 183.7 C281.1 183.7 282.5 183.0 289.1 185.6 C294.8 187.8 296.0 196.5 301.7 196.5 C305.8 196.5 306.8 196.4 310.9 191.0 C315.4 185.0 316.5 186.3 321.0 186.3 C325.5 186.3 326.5 185.5 331.0 193.4 C335.1 200.6 336.0 199.7 340.1 199.7 C343.0 199.7 343.6 200.1 346.5 198.1 C349.5 196.0 350.2 195.9 353.2 195.9 C356.3 195.9 356.9 196.0 360.0 205.5 C364.9 220.8 366.1 217.4 371.0 217.4 C375.5 217.4 376.6 218.1 381.1 215.3 C385.2 212.7 386.2 210.0 390.3 210.0 C393.3 210.0 393.9 210.0 396.9 212.6 C400.9 216.1 401.8 215.3 405.8 215.3 C415.6 215.3 417.8 218.2 427.6 207.1 C433.2 200.8 434.5 189.9 440.1 189.9 C445.5 189.9 446.6 191.0 452.0 205.5 C457.8 221.3 459.1 217.4 464.9 217.4 C470.7 217.4 471.9 217.3 477.7 205.5 C483.4 193.9 484.6 196.3 490.3 196.3 C501.3 196.3 503.8 219.0 514.8 219.0 C520.2 219.0 521.4 218.2 526.8 199.7 C532.6 179.9 533.8 184.4 539.6 184.4 C545.5 184.4 546.8 182.8 552.6 201.6 C558.3 219.8 559.5 217.4 565.2 217.4 C567.6 217.4 568.1 216.9 570.5 213.5 C573.8 208.8 574.5 210.0 577.8 210.0 C581.9 210.0 582.9 209.7 587.0 215.3 C591.1 220.8 592.0 219.9 596.1 219.9 C610.0 219.9 613.1 221.1 627.0 216.5 C639.6 212.3 642.5 211.9 655.1 211.9 C670.8 211.9 674.2 212.3 689.9 216.5 C706.8 221.0 710.5 219.9 727.4 219.9 C733.1 219.9 734.3 219.9 740.0 219.9 L768.1 183.7 L783.7 216.5 L799.0 183.7 L815.0 219.9 L845.8 183.7 L862.0 198.1 L873.9 183.7 L901.3 196.3 L921.3 184.4 L939.6 207.1 L952.1 194.3 L971.6 217.4 L989.4 200.4 L1002.5 215.3 C1011.7 215.3 1013.8 216.0 1023.0 199.7 C1026.2 194.1 1026.8 195.0 1030.0 195.0" fill="none" stroke="#1765a0" stroke-width="2.1"/><path d="M134.0 285.6 C136.9 285.6 137.5 285.6 140.4 285.6 C146.3 285.6 147.6 280.5 153.5 264.5 C158.8 250.1 160.0 253.8 165.3 253.8 C173.9 253.8 175.8 250.3 184.3 263.8 C192.4 276.5 194.1 285.8 202.2 285.8 C216.1 285.8 219.2 288.0 233.1 268.4 C247.6 247.9 250.9 250.1 265.4 250.1 C276.3 250.1 278.7 263.8 289.6 263.8 C306.7 263.8 310.4 263.8 327.5 263.8 C344.3 263.8 348.1 269.1 364.9 269.1 C370.7 269.1 371.9 264.7 377.7 254.7 C386.2 239.8 388.1 243.7 396.7 243.7 C407.7 243.7 410.1 281.2 421.1 281.2 C437.9 281.2 441.6 278.2 458.4 278.2 C461.3 278.2 462.0 282.8 464.9 282.8 C487.0 282.8 492.0 287.8 514.1 268.4 C531.2 253.3 535.1 245.1 552.2 245.1 C559.3 245.1 560.9 257.4 568.0 270.0 C576.5 285.1 578.5 281.2 587.0 281.2 C610.7 281.2 615.9 285.4 639.6 268.4 C656.4 256.3 660.1 255.6 676.9 255.6 C691.4 255.6 694.6 252.5 709.1 264.5 C723.0 276.0 726.1 285.6 740.0 285.6 C756.5 285.6 760.1 255.4 776.6 255.4 C779.8 255.4 780.5 254.3 783.7 263.8 C791.9 288.2 793.8 285.6 802.0 285.6 C816.3 285.6 819.5 288.2 833.8 268.4 C847.8 249.1 850.8 250.8 864.8 250.8 C875.8 250.8 878.2 263.8 889.2 263.8 C906.5 263.8 910.4 260.0 927.7 260.0 C945.6 260.0 949.6 276.4 967.5 276.4 C979.4 276.4 982.1 264.5 994.0 264.5 C1003.5 264.5 1005.6 285.6 1015.1 285.6 C1021.8 285.6 1023.3 272.0 1030.0 272.0" fill="none" stroke="#1765a0" stroke-width="2.1"/><circle cx="140.4" cy="219.9" r="3.1" fill="#5cc2f5" stroke="#1b6da3" stroke-width="1.2"/><circle cx="153.5" cy="196.3" r="3.1" fill="#5cc2f5" stroke="#1b6da3" stroke-width="1.2"/><circle cx="165.3" cy="183.7" r="3.1" fill="#5cc2f5" stroke="#1b6da3" stroke-width="1.2"/><circle cx="175.2" cy="197.5" r="3.1" fill="#5cc2f5" stroke="#1b6da3" stroke-width="1.2"/><circle cx="184.3" cy="216.5" r="3.1" fill="#5cc2f5" stroke="#1b6da3" stroke-width="1.2"/><circle cx="189.6" cy="199" r="3.1" fill="#5cc2f5" stroke="#1b6da3" stroke-width="1.2"/><circle cx="196.2" cy="183.7" r="3.1" fill="#5cc2f5" stroke="#1b6da3" stroke-width="1.2"/><circle cx="205.4" cy="200.9" r="3.1" fill="#5cc2f5" stroke="#1b6da3" stroke-width="1.2"/><circle cx="211.8" cy="210.3" r="3.1" fill="#5cc2f5" stroke="#1b6da3" stroke-width="1.2"/><circle cx="230.8" cy="199" r="3.1" fill="#5cc2f5" stroke="#1b6da3" stroke-width="1.2"/><circle cx="250" cy="184.6" r="3.1" fill="#5cc2f5" stroke="#1b6da3" stroke-width="1.2"/><circle cx="258.9" cy="192.9" r="3.1" fill="#5cc2f5" stroke="#1b6da3" stroke-width="1.2"/><circle cx="265.4" cy="202.7" r="3.1" fill="#5cc2f5" stroke="#1b6da3" stroke-width="1.2"/><circle cx="270.2" cy="189" r="3.1" fill="#5cc2f5" stroke="#1b6da3" stroke-width="1.2"/><circle cx="274.5" cy="183.7" r="3.1" fill="#5cc2f5" stroke="#1b6da3" stroke-width="1.2"/><circle cx="289.1" cy="185.6" r="3.1" fill="#5cc2f5" stroke="#1b6da3" stroke-width="1.2"/><circle cx="301.7" cy="196.5" r="3.1" fill="#5cc2f5" stroke="#1b6da3" stroke-width="1.2"/><circle cx="310.9" cy="191" r="3.1" fill="#5cc2f5" stroke="#1b6da3" stroke-width="1.2"/><circle cx="321" cy="186.3" r="3.1" fill="#5cc2f5" stroke="#1b6da3" stroke-width="1.2"/><circle cx="331" cy="193.4" r="3.1" fill="#5cc2f5" stroke="#1b6da3" stroke-width="1.2"/><circle cx="340.1" cy="199.7" r="3.1" fill="#5cc2f5" stroke="#1b6da3" stroke-width="1.2"/><circle cx="346.5" cy="198.1" r="3.1" fill="#5cc2f5" stroke="#1b6da3" stroke-width="1.2"/><circle cx="353.2" cy="195.9" r="3.1" fill="#5cc2f5" stroke="#1b6da3" stroke-width="1.2"/><circle cx="360" cy="205.5" r="3.1" fill="#5cc2f5" stroke="#1b6da3" stroke-width="1.2"/><circle cx="371" cy="217.4" r="3.1" fill="#5cc2f5" stroke="#1b6da3" stroke-width="1.2"/><circle cx="381.1" cy="215.3" r="3.1" fill="#5cc2f5" stroke="#1b6da3" stroke-width="1.2"/><circle cx="390.3" cy="210" r="3.1" fill="#5cc2f5" stroke="#1b6da3" stroke-width="1.2"/><circle cx="396.9" cy="212.6" r="3.1" fill="#5cc2f5" stroke="#1b6da3" stroke-width="1.2"/><circle cx="405.8" cy="215.3" r="3.1" fill="#5cc2f5" stroke="#1b6da3" stroke-width="1.2"/><circle cx="427.6" cy="207.1" r="3.1" fill="#5cc2f5" stroke="#1b6da3" stroke-width="1.2"/><circle cx="440.1" cy="189.9" r="3.1" fill="#5cc2f5" stroke="#1b6da3" stroke-width="1.2"/><circle cx="452" cy="205.5" r="3.1" fill="#5cc2f5" stroke="#1b6da3" stroke-width="1.2"/><circle cx="464.9" cy="217.4" r="3.1" fill="#5cc2f5" stroke="#1b6da3" stroke-width="1.2"/><circle cx="477.7" cy="205.5" r="3.1" fill="#5cc2f5" stroke="#1b6da3" stroke-width="1.2"/><circle cx="490.3" cy="196.3" r="3.1" fill="#5cc2f5" stroke="#1b6da3" stroke-width="1.2"/><circle cx="514.8" cy="219" r="3.1" fill="#5cc2f5" stroke="#1b6da3" stroke-width="1.2"/><circle cx="526.8" cy="199.7" r="3.1" fill="#5cc2f5" stroke="#1b6da3" stroke-width="1.2"/><circle cx="539.6" cy="184.4" r="3.1" fill="#5cc2f5" stroke="#1b6da3" stroke-width="1.2"/><circle cx="552.6" cy="201.6" r="3.1" fill="#5cc2f5" stroke="#1b6da3" stroke-width="1.2"/><circle cx="565.2" cy="217.4" r="3.1" fill="#5cc2f5" stroke="#1b6da3" stroke-width="1.2"/><circle cx="570.5" cy="213.5" r="3.1" fill="#5cc2f5" stroke="#1b6da3" stroke-width="1.2"/><circle cx="577.8" cy="210" r="3.1" fill="#5cc2f5" stroke="#1b6da3" stroke-width="1.2"/><circle cx="587" cy="215.3" r="3.1" fill="#5cc2f5" stroke="#1b6da3" stroke-width="1.2"/><circle cx="596.1" cy="219.9" r="3.1" fill="#5cc2f5" stroke="#1b6da3" stroke-width="1.2"/><circle cx="627" cy="216.5" r="3.1" fill="#5cc2f5" stroke="#1b6da3" stroke-width="1.2"/><circle cx="655.1" cy="211.9" r="3.1" fill="#5cc2f5" stroke="#1b6da3" stroke-width="1.2"/><circle cx="689.9" cy="216.5" r="3.1" fill="#5cc2f5" stroke="#1b6da3" stroke-width="1.2"/><circle cx="727.4" cy="219.9" r="3.1" fill="#5cc2f5" stroke="#1b6da3" stroke-width="1.2"/><circle cx="740" cy="219.9" r="3.1" fill="#5cc2f5" stroke="#1b6da3" stroke-width="1.2"/><circle cx="768.1" cy="183.7" r="3.1" fill="#5cc2f5" stroke="#1b6da3" stroke-width="1.2"/><circle cx="783.7" cy="216.5" r="3.1" fill="#5cc2f5" stroke="#1b6da3" stroke-width="1.2"/><circle cx="799" cy="183.7" r="3.1" fill="#5cc2f5" stroke="#1b6da3" stroke-width="1.2"/><circle cx="815" cy="219.9" r="3.1" fill="#5cc2f5" stroke="#1b6da3" stroke-width="1.2"/><circle cx="845.8" cy="183.7" r="3.1" fill="#5cc2f5" stroke="#1b6da3" stroke-width="1.2"/><circle cx="862" cy="198.1" r="3.1" fill="#5cc2f5" stroke="#1b6da3" stroke-width="1.2"/><circle cx="873.9" cy="183.7" r="3.1" fill="#5cc2f5" stroke="#1b6da3" stroke-width="1.2"/><circle cx="901.3" cy="196.3" r="3.1" fill="#5cc2f5" stroke="#1b6da3" stroke-width="1.2"/><circle cx="921.3" cy="184.4" r="3.1" fill="#5cc2f5" stroke="#1b6da3" stroke-width="1.2"/><circle cx="939.6" cy="207.1" r="3.1" fill="#5cc2f5" stroke="#1b6da3" stroke-width="1.2"/><circle cx="952.1" cy="194.3" r="3.1" fill="#5cc2f5" stroke="#1b6da3" stroke-width="1.2"/><circle cx="971.6" cy="217.4" r="3.1" fill="#5cc2f5" stroke="#1b6da3" stroke-width="1.2"/><circle cx="989.4" cy="200.4" r="3.1" fill="#5cc2f5" stroke="#1b6da3" stroke-width="1.2"/><circle cx="1002.5" cy="215.3" r="3.1" fill="#5cc2f5" stroke="#1b6da3" stroke-width="1.2"/><circle cx="1023" cy="199.7" r="3.1" fill="#5cc2f5" stroke="#1b6da3" stroke-width="1.2"/><circle cx="140.4" cy="285.6" r="3.1" fill="#5cc2f5" stroke="#1b6da3" stroke-width="1.2"/><circle cx="153.5" cy="264.5" r="3.1" fill="#5cc2f5" stroke="#1b6da3" stroke-width="1.2"/><circle cx="165.3" cy="253.8" r="3.1" fill="#5cc2f5" stroke="#1b6da3" stroke-width="1.2"/><circle cx="184.3" cy="263.8" r="3.1" fill="#5cc2f5" stroke="#1b6da3" stroke-width="1.2"/><circle cx="202.2" cy="285.8" r="3.1" fill="#5cc2f5" stroke="#1b6da3" stroke-width="1.2"/><circle cx="233.1" cy="268.4" r="3.1" fill="#5cc2f5" stroke="#1b6da3" stroke-width="1.2"/><circle cx="265.4" cy="250.1" r="3.1" fill="#5cc2f5" stroke="#1b6da3" stroke-width="1.2"/><circle cx="289.6" cy="263.8" r="3.1" fill="#5cc2f5" stroke="#1b6da3" stroke-width="1.2"/><circle cx="327.5" cy="263.8" r="3.1" fill="#5cc2f5" stroke="#1b6da3" stroke-width="1.2"/><circle cx="364.9" cy="269.1" r="3.1" fill="#5cc2f5" stroke="#1b6da3" stroke-width="1.2"/><circle cx="377.7" cy="254.7" r="3.1" fill="#5cc2f5" stroke="#1b6da3" stroke-width="1.2"/><circle cx="396.7" cy="243.7" r="3.1" fill="#5cc2f5" stroke="#1b6da3" stroke-width="1.2"/><circle cx="421.1" cy="281.2" r="3.1" fill="#5cc2f5" stroke="#1b6da3" stroke-width="1.2"/><circle cx="458.4" cy="278.2" r="3.1" fill="#5cc2f5" stroke="#1b6da3" stroke-width="1.2"/><circle cx="464.9" cy="282.8" r="3.1" fill="#5cc2f5" stroke="#1b6da3" stroke-width="1.2"/><circle cx="514.1" cy="268.4" r="3.1" fill="#5cc2f5" stroke="#1b6da3" stroke-width="1.2"/><circle cx="552.2" cy="245.1" r="3.1" fill="#5cc2f5" stroke="#1b6da3" stroke-width="1.2"/><circle cx="568" cy="270" r="3.1" fill="#5cc2f5" stroke="#1b6da3" stroke-width="1.2"/><circle cx="587" cy="281.2" r="3.1" fill="#5cc2f5" stroke="#1b6da3" stroke-width="1.2"/><circle cx="639.6" cy="268.4" r="3.1" fill="#5cc2f5" stroke="#1b6da3" stroke-width="1.2"/><circle cx="676.9" cy="255.6" r="3.1" fill="#5cc2f5" stroke="#1b6da3" stroke-width="1.2"/><circle cx="709.1" cy="264.5" r="3.1" fill="#5cc2f5" stroke="#1b6da3" stroke-width="1.2"/><circle cx="740" cy="285.6" r="3.1" fill="#5cc2f5" stroke="#1b6da3" stroke-width="1.2"/><circle cx="776.6" cy="255.4" r="3.1" fill="#5cc2f5" stroke="#1b6da3" stroke-width="1.2"/><circle cx="783.7" cy="263.8" r="3.1" fill="#5cc2f5" stroke="#1b6da3" stroke-width="1.2"/><circle cx="802" cy="285.6" r="3.1" fill="#5cc2f5" stroke="#1b6da3" stroke-width="1.2"/><circle cx="833.8" cy="268.4" r="3.1" fill="#5cc2f5" stroke="#1b6da3" stroke-width="1.2"/><circle cx="864.8" cy="250.8" r="3.1" fill="#5cc2f5" stroke="#1b6da3" stroke-width="1.2"/><circle cx="889.2" cy="263.8" r="3.1" fill="#5cc2f5" stroke="#1b6da3" stroke-width="1.2"/><circle cx="927.7" cy="260" r="3.1" fill="#5cc2f5" stroke="#1b6da3" stroke-width="1.2"/><circle cx="967.5" cy="276.4" r="3.1" fill="#5cc2f5" stroke="#1b6da3" stroke-width="1.2"/><circle cx="994" cy="264.5" r="3.1" fill="#5cc2f5" stroke="#1b6da3" stroke-width="1.2"/><circle cx="1015.1" cy="285.6" r="3.1" fill="#5cc2f5" stroke="#1b6da3" stroke-width="1.2"/></g><rect x="134" y="314" width="890" height="2" fill="#0a0a0a"/></svg>
<div class="abs" style="left:0px;top:314px;width:134px;height:2px;background:#0a0a0a"></div>
<div class="abs" style="left:0px;top:316px;width:1024px;height:22px;background:#1f1f1f"></div>
<div class="abs" style="left:0px;top:338px;width:1024px;height:5px;background:#1a1a1a"></div>
<div class="abs" style="left:0px;top:343px;width:1024px;height:3px;background:#383838"></div>
<div class="abs" style="left:0px;top:346px;width:1024px;height:10px;background:#000"></div>
<svg style="left:0px;top:316px" width="1024" height="22" viewBox="0 0 1024 22"><path d="M-2 9 L4 9 L4 12 L-2 12 Z" fill="#e86010"/><path d="M11.5 7.5 L18 14 M18 7.5 L11.5 14" stroke="#ddd" stroke-width="1.6"/><path d="M143 7.2 L137 11 L143 14.8 Z" fill="#8a8a8a"/><rect x="150" y="6.6" width="189" height="8.4" rx="3" fill="#4a4a4a"/><path d="M918.5 7.5 L924.7 11 L918.5 14.5 Z" fill="#8a8a8a"/><rect x="932" y="3" width="19" height="15" rx="2" fill="#181818"/><g fill="none" stroke="#e8661a" stroke-width="1.3"><circle cx="938" cy="9" r="1.6"/><circle cx="945.5" cy="5.6" r="1.6"/><line x1="939.5" y1="8.2" x2="944" y2="6.2"/><rect x="935.5" y="11.6" width="6" height="3.8" rx="1.9"/><rect x="942" y="11.6" width="6" height="3.8" rx="1.9"/></g></svg>
<div class="txt" style="right:3.5px;top:320px;font-size:11px;color:#d8d8d8;">1/4</div>
<div class="abs" style="left:567px;top:348px;width:457px;height:5px;background:#1e4a68"></div>
<div class="abs" style="left:567px;top:353px;width:9px;height:3px;background:#1e4a68"></div>
<svg style="left:0px;top:0px" width="1024" height="568" viewBox="0 0 1024 568"><defs><radialGradient id="kg" cx="0.5" cy="0.2" r="0.9"><stop offset="0" stop-color="#5a5a5a"/><stop offset="1" stop-color="#262626"/></radialGradient><linearGradient id="gold" x1="0" x2="1"><stop offset="0" stop-color="#5a5230"/><stop offset="1" stop-color="#b8a040"/></linearGradient></defs><rect x="0" y="355.5" width="560.5" height="199" rx="5" fill="#2a2a2a"/><path d="M5 355.5 L22 355.5 L22 554.5 L5 554.5 A5 5 0 0 1 0 549.5 L0 360.5 A5 5 0 0 1 5 355.5 Z" fill="#3a3a3a"/><rect x="26" y="358" width="62" height="62.5" rx="3" fill="#121212"/><rect x="91" y="358" width="63" height="62.5" rx="3" fill="#121212"/><rect x="157" y="358" width="62" height="62.5" rx="3" fill="#121212"/><rect x="222" y="358" width="62" height="62.5" rx="3" fill="#121212"/><rect x="288" y="358" width="62" height="62.5" rx="3" fill="#212121"/><rect x="26" y="424" width="62" height="62" rx="3" fill="#121212"/><rect x="91" y="424" width="63" height="62" rx="3" fill="#121212"/><rect x="157" y="424" width="62" height="62" rx="3" fill="#121212"/><rect x="222" y="424" width="62" height="62" rx="3" fill="#121212"/><rect x="288" y="424" width="62" height="62" rx="3" fill="#121212"/><rect x="26" y="489.6" width="62" height="62.39999999999998" rx="3" fill="#121212"/><rect x="91" y="489.6" width="63" height="62.39999999999998" rx="3" fill="#121212"/><rect x="157" y="489.6" width="62" height="62.39999999999998" rx="3" fill="#121212"/><rect x="222" y="489.6" width="62" height="62.39999999999998" rx="3" fill="#212121"/><rect x="288" y="489.6" width="62" height="62.39999999999998" rx="3" fill="#121212"/><path d="M248.5 520.8 L257.5 520.8 M253.0 516.3 L253.0 525.3" stroke="#bbb" stroke-width="1.6"/><path d="M314.5 389.25 L323.5 389.25 M319.0 384.75 L319.0 393.75" stroke="#bbb" stroke-width="1.6"/><g fill="none" stroke="#e86010" stroke-width="1.6"><path d="M7.9 364.6 A4 4 0 1 0 13.3 364.6"/><line x1="10.6" y1="362.6" x2="10.6" y2="367.5"/></g><path d="M5.5 383 L9 383 L10 384 L15.5 384 L15.5 391.5 L5.5 391.5 Z" fill="#a0a0a0"/><circle cx="6.5" cy="527.5" r="1.1" fill="#bbb"/><circle cx="6.5" cy="531.0" r="1.1" fill="#bbb"/><circle cx="9.8" cy="527.5" r="1.1" fill="#bbb"/><circle cx="9.8" cy="531.0" r="1.1" fill="#bbb"/><circle cx="13.1" cy="527.5" r="1.1" fill="#bbb"/><circle cx="13.1" cy="531.0" r="1.1" fill="#bbb"/><circle cx="7" cy="544.9" r="2" fill="#e86010"/><rect x="7" y="544.3" width="6" height="1.2" fill="#e86010"/><path d="M12 542.5 L15.5 544.9 L12 547.3 Z" fill="#e86010"/><rect x="26" y="376" width="62" height="1.3" fill="#8a7a30"/><rect x="26" y="376" width="1.2" height="13" fill="#5a5028"/><circle cx="57" cy="389.3" r="9.5" fill="none" stroke="#8a8a8a" stroke-width="1"/><circle cx="51.58" cy="388.54" r="1.1" fill="#8a8a8a"/><circle cx="53.65" cy="385.69" r="1.1" fill="#8a8a8a"/><circle cx="57.00" cy="384.60" r="1.1" fill="#8a8a8a"/><circle cx="60.35" cy="385.69" r="1.1" fill="#8a8a8a"/><circle cx="62.42" cy="388.54" r="1.1" fill="#8a8a8a"/><circle cx="52.3" cy="413.6" r="3.1" fill="#a8e4f8"/><rect x="52.3" y="412.90000000000003" width="10" height="1.4" fill="#a8e4f8"/><path d="M60.8 410.3 L65.3 413.6 L60.8 416.90000000000003 Z" fill="#a8e4f8"/><rect x="26" y="512" width="62" height="1.3" fill="#8a7a30"/><rect x="26" y="512" width="1.2" height="9" fill="#5a5028"/><circle cx="57" cy="520" r="9.5" fill="none" stroke="#8a8a8a" stroke-width="1"/><circle cx="51.58" cy="519.24" r="1.1" fill="#8a8a8a"/><circle cx="53.65" cy="516.39" r="1.1" fill="#8a8a8a"/><circle cx="57.00" cy="515.30" r="1.1" fill="#8a8a8a"/><circle cx="60.35" cy="516.39" r="1.1" fill="#8a8a8a"/><circle cx="62.42" cy="519.24" r="1.1" fill="#8a8a8a"/><circle cx="52.3" cy="544.4" r="3.1" fill="#5ad0f8"/><rect x="52.3" y="543.6999999999999" width="10" height="1.4" fill="#5ad0f8"/><path d="M60.8 541.1 L65.3 544.4 L60.8 547.6999999999999 Z" fill="#5ad0f8"/><path d="M33.81 467.29 A12 12 0 1 1 50.79 467.29" fill="none" stroke="#2c2c2c" stroke-width="2.2"/><path d="M42.30 446.80 A12 12 0 0 1 52.48 452.44" fill="none" stroke="#1aa8e8" stroke-width="2.2"/><circle cx="42.3" cy="458.8" r="8" fill="url(#kg)"/><circle cx="42.3" cy="458.8" r="8" fill="none" stroke="#1a1a1a" stroke-width="0.8"/><line x1="42.30" y1="456.40" x2="42.30" y2="452.00" stroke="#e8e8e8" stroke-width="2"/><circle cx="42.3" cy="446.8" r="1.2" fill="#d05010"/><path d="M63.01 467.29 A12 12 0 1 1 79.99 467.29" fill="none" stroke="#2c2c2c" stroke-width="2.2"/><path d="M71.50 446.80 A12 12 0 0 1 79.99 467.29" fill="none" stroke="#e8600a" stroke-width="2.2"/><circle cx="71.5" cy="458.8" r="8" fill="url(#kg)"/><circle cx="71.5" cy="458.8" r="8" fill="none" stroke="#1a1a1a" stroke-width="0.8"/><line x1="73.20" y1="460.50" x2="76.31" y2="463.61" stroke="#e8e8e8" stroke-width="2"/><circle cx="52.5" cy="479.2" r="3.1" fill="#5ad0f8"/><rect x="52.5" y="478.5" width="10" height="1.4" fill="#5ad0f8"/><path d="M61.0 475.9 L65.5 479.2 L61.0 482.5 Z" fill="#5ad0f8"/><path d="M111.13 399.47 A15.8 15.8 0 1 1 133.47 399.47" fill="none" stroke="#2c2c2c" stroke-width="2.6"/><path d="M111.13 399.47 A15.8 15.8 0 1 1 137.56 384.21" fill="none" stroke="#1aa8e8" stroke-width="2.6"/><circle cx="122.3" cy="388.3" r="10.8" fill="url(#kg)"/><circle cx="122.3" cy="388.3" r="10.8" fill="none" stroke="#1a1a1a" stroke-width="0.8"/><line x1="120.01" y1="390.59" x2="115.81" y2="394.79" stroke="#e8e8e8" stroke-width="2"/><circle cx="117.6" cy="413.5" r="3.1" fill="#a8e4f8"/><rect x="117.6" y="412.8" width="10" height="1.4" fill="#a8e4f8"/><path d="M126.1 410.2 L130.6 413.5 L126.1 416.8 Z" fill="#a8e4f8"/><path d="M165.36 401.54 A11.8 11.8 0 1 1 182.04 401.54" fill="none" stroke="#2c2c2c" stroke-width="2.2"/><path d="M173.70 381.40 A11.8 11.8 0 0 1 184.64 397.62" fill="none" stroke="#1aa8e8" stroke-width="2.2"/><circle cx="173.7" cy="393.2" r="7.6" fill="url(#kg)"/><circle cx="173.7" cy="393.2" r="7.6" fill="none" stroke="#1a1a1a" stroke-width="0.8"/><line x1="173.70" y1="390.92" x2="173.70" y2="386.74" stroke="#e8e8e8" stroke-width="2"/><circle cx="173.7" cy="381.4" r="1.2" fill="#d05010"/><path d="M194.36 401.54 A11.8 11.8 0 1 1 211.04 401.54" fill="none" stroke="#2c2c2c" stroke-width="2.2"/><path d="M201.06 381.51 A11.8 11.8 0 0 1 213.12 398.74" fill="none" stroke="#e8600a" stroke-width="2.2"/><path d="M213.12 398.74 A11.8 11.8 0 0 1 211.04 401.54" fill="none" stroke="#1a5a80" stroke-width="2.2"/><circle cx="202.7" cy="393.2" r="7.6" fill="url(#kg)"/><circle cx="202.7" cy="393.2" r="7.6" fill="none" stroke="#1a1a1a" stroke-width="0.8"/><line x1="204.31" y1="394.81" x2="207.27" y2="397.77" stroke="#e8e8e8" stroke-width="2"/><circle cx="183.6" cy="413.5" r="3.1" fill="#a8e4f8"/><rect x="183.6" y="412.8" width="10" height="1.4" fill="#a8e4f8"/><path d="M192.1 410.2 L196.6 413.5 L192.1 416.8 Z" fill="#a8e4f8"/><polyline points="227.9,363.9 229.2,364.1 230.5,364.8 231.8,366.0 233.2,367.5 234.5,369.4 235.8,371.7 237.1,374.2 238.4,376.9 239.7,379.8 241.0,382.8 242.3,385.7 243.7,388.6 245.0,391.3 246.3,393.8 247.6,396.1 248.9,398.0 250.2,399.5 251.5,400.7 252.8,401.4 254.1,401.6 255.5,401.4 256.8,400.7 258.1,399.5 259.4,398.0 260.7,396.1 262.0,393.8 263.3,391.3 264.6,388.6 266.0,385.7 267.3,382.8 268.6,379.8 269.9,376.9 271.2,374.2 272.5,371.7 273.8,369.4 275.1,367.5 276.5,366.0 277.8,364.8 279.1,364.1 280.4,363.9" fill="none" stroke="#d0580a" stroke-width="1.5"/><circle cx="237.2" cy="375.1" r="2.6" fill="#fff"/><circle cx="249.6" cy="413.3" r="3.1" fill="#5ad0f8"/><rect x="249.6" y="412.6" width="10" height="1.4" fill="#5ad0f8"/><path d="M258.1 410.0 L262.6 413.3 L258.1 416.6 Z" fill="#5ad0f8"/><polyline points="96.6,429.2 97.9,429.3 99.2,429.7 100.5,430.2 101.8,431.0 103.1,432.0 104.5,433.1 105.8,434.4 107.1,435.8 108.4,437.3 109.7,438.8 111.0,440.2 112.3,441.7 113.6,443.1 114.9,444.4 116.2,445.5 117.6,446.5 118.9,447.3 120.2,447.8 121.5,448.2 122.8,448.3 124.1,448.2 125.4,447.8 126.7,447.3 128.0,446.5 129.3,445.5 130.7,444.4 132.0,443.1 133.3,441.7 134.6,440.2 135.9,438.8 137.2,437.3 138.5,435.8 139.8,434.4 141.1,433.1 142.4,432.0 143.8,431.0 145.1,430.2 146.4,429.7 147.7,429.3 149.0,429.2" fill="none" stroke="#d0580a" stroke-width="1.5"/><circle cx="143.5" cy="441.9" r="2.6" fill="#fff"/><circle cx="117.6" cy="479.2" r="3.1" fill="#5ad0f8"/><rect x="117.6" y="478.5" width="10" height="1.4" fill="#5ad0f8"/><path d="M126.1 475.9 L130.6 479.2 L126.1 482.5 Z" fill="#5ad0f8"/><rect x="183" y="428" width="10.5" height="10.5" fill="#fff"/><rect x="186.0" y="428" width="1" height="10.5" fill="#131313"/><rect x="189.5" y="428" width="1" height="10.5" fill="#131313"/><rect x="184.6" y="428" width="1.6" height="6" fill="#131313"/><rect x="188.1" y="428" width="1.6" height="6" fill="#131313"/><rect x="191.6" y="428" width="1.6" height="6" fill="#131313"/><path d="M175.6 433.3 L178.6 431 L178.6 435.6 Z" fill="#ddd"/><path d="M200.8 433.3 L197.8 431 L197.8 435.6 Z" fill="#ddd"/><line x1="157" y1="461.3" x2="219.3" y2="449" stroke="#c8101a" stroke-width="1.5"/><circle cx="210.7" cy="450.8" r="2.1" fill="#fff" stroke="#c8101a" stroke-width="0.8"/><circle cx="183.6" cy="479.2" r="3.1" fill="#5ad0f8"/><rect x="183.6" y="478.5" width="10" height="1.4" fill="#5ad0f8"/><path d="M192.1 475.9 L196.6 479.2 L192.1 482.5 Z" fill="#5ad0f8"/><circle cx="268.9" cy="433.6" r="3.1" fill="#22c0f8"/><rect x="268.9" y="432.90000000000003" width="10" height="1.4" fill="#22c0f8"/><path d="M277.4 430.3 L281.9 433.6 L277.4 436.90000000000003 Z" fill="#22c0f8"/><circle cx="268.9" cy="448.20000000000005" r="3.1" fill="#a8e4f8"/><rect x="268.9" y="447.50000000000006" width="10" height="1.4" fill="#a8e4f8"/><path d="M277.4 444.90000000000003 L281.9 448.20000000000005 L277.4 451.50000000000006 Z" fill="#a8e4f8"/><circle cx="268.9" cy="462.8" r="3.1" fill="#22a8d8"/><rect x="268.9" y="462.1" width="10" height="1.4" fill="#22a8d8"/><path d="M277.4 459.5 L281.9 462.8 L277.4 466.1 Z" fill="#22a8d8"/><circle cx="268.9" cy="477.40000000000003" r="3.1" fill="#50c8f0"/><rect x="268.9" y="476.70000000000005" width="10" height="1.4" fill="#50c8f0"/><path d="M277.4 474.1 L281.9 477.40000000000003 L277.4 480.70000000000005 Z" fill="#50c8f0"/><circle cx="319.4" cy="455.1" r="9.2" fill="none" stroke="#8a8a8a" stroke-width="1"/><circle cx="314.15" cy="454.39" r="1.1" fill="#8a8a8a"/><circle cx="316.16" cy="451.63" r="1.1" fill="#8a8a8a"/><circle cx="319.40" cy="450.58" r="1.1" fill="#8a8a8a"/><circle cx="322.64" cy="451.63" r="1.1" fill="#8a8a8a"/><circle cx="324.65" cy="454.39" r="1.1" fill="#8a8a8a"/><rect x="288" y="454.6" width="62" height="1.6" fill="url(#gold)"/><circle cx="314.8" cy="479.2" r="3.1" fill="#22c0f8"/><rect x="314.8" y="478.5" width="10" height="1.4" fill="#22c0f8"/><path d="M323.3 475.9 L327.8 479.2 L323.3 482.5 Z" fill="#22c0f8"/><path d="M111.33 531.87 A15.8 15.8 0 1 1 133.67 531.87" fill="none" stroke="#2c2c2c" stroke-width="2.6"/><circle cx="122.5" cy="520.7" r="10.8" fill="url(#kg)"/><circle cx="122.5" cy="520.7" r="10.8" fill="none" stroke="#1a1a1a" stroke-width="0.8"/><line x1="122.50" y1="517.46" x2="122.50" y2="511.52" stroke="#e8e8e8" stroke-width="2"/><circle cx="122.5" cy="504.90000000000003" r="1.2" fill="#e06010"/><g stroke="#e06010" stroke-width="1.2"><line x1="143.5" y1="518.8" x2="149.5" y2="518.8"/><line x1="146.5" y1="515.8" x2="146.5" y2="521.8"/><line x1="143.5" y1="524" x2="149.5" y2="524"/></g><circle cx="117.6" cy="544.8" r="3.1" fill="#22c0f8"/><rect x="117.6" y="544.0999999999999" width="10" height="1.4" fill="#22c0f8"/><path d="M126.1 541.5 L130.6 544.8 L126.1 548.0999999999999 Z" fill="#22c0f8"/><g stroke="#bbb" stroke-width="1.2"><line x1="143.5" y1="387.5" x2="149.5" y2="387.5"/><line x1="146.5" y1="384.5" x2="146.5" y2="390.5"/><line x1="143.5" y1="392" x2="149.5" y2="392"/></g><path d="M165.36 532.14 A11.8 11.8 0 1 1 182.04 532.14" fill="none" stroke="#2c2c2c" stroke-width="2.2"/><path d="M171.25 512.26 A11.8 11.8 0 0 1 181.28 514.76" fill="none" stroke="#2a5a78" stroke-width="2.2"/><circle cx="173.7" cy="523.8" r="7.6" fill="url(#kg)"/><circle cx="173.7" cy="523.8" r="7.6" fill="none" stroke="#1a1a1a" stroke-width="0.8"/><line x1="175.17" y1="522.05" x2="177.85" y2="518.85" stroke="#e8e8e8" stroke-width="2"/><path d="M194.36 532.14 A11.8 11.8 0 1 1 211.04 532.14" fill="none" stroke="#2c2c2c" stroke-width="2.2"/><path d="M201.67 512.04 A11.8 11.8 0 0 1 212.00 516.54" fill="none" stroke="#e8600a" stroke-width="2.2"/><path d="M212.00 516.54 A11.8 11.8 0 0 1 214.32 525.85" fill="none" stroke="#1aa8e8" stroke-width="2.2"/><circle cx="202.7" cy="523.8" r="7.6" fill="url(#kg)"/><circle cx="202.7" cy="523.8" r="7.6" fill="none" stroke="#1a1a1a" stroke-width="0.8"/><line x1="204.17" y1="522.05" x2="206.85" y2="518.85" stroke="#e8e8e8" stroke-width="2"/><circle cx="183.6" cy="544.8" r="3.1" fill="#22c0f8"/><rect x="183.6" y="544.0999999999999" width="10" height="1.4" fill="#22c0f8"/><path d="M192.1 541.5 L196.6 544.8 L192.1 548.0999999999999 Z" fill="#22c0f8"/><path d="M295.96 532.74 A11.8 11.8 0 1 1 312.64 532.74" fill="none" stroke="#2c2c2c" stroke-width="2.2"/><path d="M298.40 514.18 A11.8 11.8 0 0 1 306.35 512.78" fill="none" stroke="#e8600a" stroke-width="2.2"/><path d="M306.35 512.78 A11.8 11.8 0 0 1 312.64 532.74" fill="none" stroke="#2a6a90" stroke-width="2.2"/><circle cx="304.3" cy="524.4" r="7.6" fill="url(#kg)"/><circle cx="304.3" cy="524.4" r="7.6" fill="none" stroke="#1a1a1a" stroke-width="0.8"/><line x1="305.91" y1="526.01" x2="308.87" y2="528.97" stroke="#e8e8e8" stroke-width="2"/><path d="M325.56 532.74 A11.8 11.8 0 1 1 342.24 532.74" fill="none" stroke="#2c2c2c" stroke-width="2.2"/><path d="M325.56 532.74 A11.8 11.8 0 0 1 331.45 512.86" fill="none" stroke="#2a6a90" stroke-width="2.2"/><path d="M331.45 512.86 A11.8 11.8 0 0 1 339.80 514.18" fill="none" stroke="#e8600a" stroke-width="2.2"/><circle cx="333.9" cy="524.4" r="7.6" fill="url(#kg)"/><circle cx="333.9" cy="524.4" r="7.6" fill="none" stroke="#1a1a1a" stroke-width="0.8"/><line x1="332.29" y1="526.01" x2="329.33" y2="528.97" stroke="#e8e8e8" stroke-width="2"/><circle cx="314.8" cy="544.8" r="3.1" fill="#22c0f8"/><rect x="314.8" y="544.0999999999999" width="10" height="1.4" fill="#22c0f8"/><path d="M323.3 541.5 L327.8 544.8 L323.3 548.0999999999999 Z" fill="#22c0f8"/></svg>
<div class="txt" style="left:-42.8px;width:200px;text-align:center;top:362.5px;font-size:11px;color:#e8e8e8;transform:scaleX(0.92)">CC 11</div>
<div class="txt" style="left:-42.5px;width:200px;text-align:center;top:494px;font-size:11px;color:#e8e8e8;transform:scaleX(0.92)">CC 1</div>
<div class="txt" style="left:-45.5px;width:200px;text-align:center;top:431.5px;font-size:11px;color:#e8e8e8;transform:scaleX(0.9)">MUL</div>
<div class="txt" style="left:22.799999999999997px;width:200px;text-align:center;top:362px;font-size:11px;color:#e8e8e8;transform:scaleX(0.86)">Dynamics</div>
<div class="txt" style="left:86px;width:200px;text-align:center;top:366px;font-size:11px;color:#e8e8e8;transform:scaleX(0.9)">MUL</div>
<div class="txt" style="left:86px;width:200px;text-align:center;top:497px;font-size:11px;color:#e8e8e8;transform:scaleX(0.9)">MUL</div>
<div class="txt" style="left:217.3px;width:200px;text-align:center;top:497px;font-size:11px;color:#e8e8e8;transform:scaleX(0.9)">MUL</div>
<div class="txt" style="left:23.099999999999994px;width:200px;text-align:center;top:493px;font-size:11px;color:#e8e8e8;transform:scaleX(0.9)">Pitch</div>
<div class="txt" style="left:220px;width:200px;text-align:center;top:429px;font-size:10px;color:#e8e8e8;transform:scaleX(0.95)">BEND</div>
<div class="txt" style="left:226.4px;top:428.7px;font-size:11px;color:#e8e8e8;transform:scaleX(0.85);transform-origin:0 0;">Attack</div>
<div class="txt" style="left:226.4px;top:443.3px;font-size:11px;color:#e8e8e8;transform:scaleX(0.85);transform-origin:0 0;">Release</div>
<div class="txt" style="left:226.4px;top:457.9px;font-size:11px;color:#e8e8e8;transform:scaleX(0.85);transform-origin:0 0;">Tune</div>
<div class="txt" style="left:226.4px;top:472.5px;font-size:11px;color:#e8e8e8;transform:scaleX(0.85);transform-origin:0 0;">Gain</div>
<svg style="left:0px;top:0px" width="360" height="568" viewBox="0 0 360 568"><path d="M67 434.3 L71 434.3 L69 436.6 Z" fill="#eee"/><path d="M198.4 369.2 L202.4 369.2 L200.4 371.4 Z" fill="#eee"/><path d="M198.4 500.5 L202.4 500.5 L200.4 502.7 Z" fill="#eee"/><path d="M329.5 500.5 L333.5 500.5 L331.5 502.7 Z" fill="#eee"/></svg>
<div class="txt" style="left:4.5px;top:509.5px;font-size:10px;color:#ececec;transform:rotate(-90deg) scaleX(0.895);transform-origin:0 0;">INSTRUMENT SELECTOR</div>
<svg style="left:0px;top:0px" width="1024" height="568" viewBox="0 0 1024 568"><defs><linearGradient id="bg1" x1="0" y1="0" x2="0" y2="1"><stop offset="0" stop-color="#5a5a5a"/><stop offset="1" stop-color="#444"/></linearGradient></defs><rect x="352" y="356" width="157" height="198" rx="2" fill="#2a2a2a"/><rect x="353.6" y="358" width="153" height="19" fill="#131313"/><rect x="470.9" y="359" width="17.1" height="17.1" rx="1.5" fill="url(#bg1)"/><rect x="489.1" y="359" width="17.1" height="17.1" rx="1.5" fill="url(#bg1)"/><path d="M475.5 371 L483.5 371 L479.5 365 Z" fill="#fff"/><path d="M493.6 365 L501.6 365 L497.6 371 Z" fill="#fff"/><rect x="354" y="380.9" width="152.5" height="24.600000000000023" fill="#1e1e1e"/><rect x="354" y="380.9" width="4" height="24.600000000000023" fill="#1b4868"/><circle cx="369.5" cy="393.5" r="3.8" fill="#f0c010"/><circle cx="371.6" cy="391.59999999999997" r="3.4" fill="#1e1e1e"/><rect x="483.1" y="384.0" width="10" height="19.1" fill="#080808"/><rect x="484.6" y="387.7" width="7.4" height="14.3" fill="#5a2a08"/><rect x="484.6" y="387.7" width="7.4" height="1.8" fill="#e86a10"/><rect x="495.3" y="384.2" width="4.2" height="18.7" fill="#141414" stroke="#2a2a2a" stroke-width="0.7"/><rect x="500.3" y="384.2" width="4.2" height="18.7" fill="#141414" stroke="#2a2a2a" stroke-width="0.7"/><rect x="354" y="407" width="152.5" height="24" fill="#1e1e1e"/><rect x="354" y="407" width="4" height="24" fill="#1b4868"/><circle cx="369.5" cy="419.3" r="3.8" fill="#303030"/><circle cx="371.6" cy="417.4" r="3.4" fill="#1e1e1e"/><rect x="483.1" y="410.1" width="10" height="19.1" fill="#080808"/><rect x="484.6" y="413.8" width="7.4" height="14.3" fill="#5a2a08"/><rect x="484.6" y="413.8" width="7.4" height="1.8" fill="#e86a10"/><rect x="495.3" y="410.3" width="4.2" height="18.7" fill="#141414" stroke="#2a2a2a" stroke-width="0.7"/><rect x="500.3" y="410.3" width="4.2" height="18.7" fill="#141414" stroke="#2a2a2a" stroke-width="0.7"/><rect x="354" y="432.4" width="152.5" height="23.80000000000001" fill="#1e1e1e"/><rect x="354" y="432.4" width="4" height="23.80000000000001" fill="#1b4868"/><circle cx="369.5" cy="444.59999999999997" r="3.8" fill="#303030"/><circle cx="371.6" cy="442.69999999999993" r="3.4" fill="#1e1e1e"/><rect x="483.1" y="435.5" width="10" height="19.1" fill="#080808"/><rect x="484.6" y="439.2" width="7.4" height="14.3" fill="#5a2a08"/><rect x="484.6" y="439.2" width="7.4" height="1.8" fill="#e86a10"/><rect x="495.3" y="435.7" width="4.2" height="18.7" fill="#141414" stroke="#2a2a2a" stroke-width="0.7"/><rect x="500.3" y="435.7" width="4.2" height="18.7" fill="#141414" stroke="#2a2a2a" stroke-width="0.7"/><rect x="354" y="458" width="152.5" height="23.69999999999999" fill="#1e1e1e"/><rect x="354" y="458" width="4" height="23.69999999999999" fill="#1b4868"/><circle cx="369.5" cy="470.15000000000003" r="3.8" fill="#303030"/><circle cx="371.6" cy="468.25" r="3.4" fill="#1e1e1e"/><rect x="483.1" y="461.1" width="10" height="19.1" fill="#080808"/><rect x="484.6" y="464.8" width="7.4" height="14.3" fill="#5a2a08"/><rect x="484.6" y="464.8" width="7.4" height="1.8" fill="#e86a10"/><rect x="495.3" y="461.3" width="4.2" height="18.7" fill="#141414" stroke="#2a2a2a" stroke-width="0.7"/><rect x="500.3" y="461.3" width="4.2" height="18.7" fill="#141414" stroke="#2a2a2a" stroke-width="0.7"/><rect x="354" y="482" width="152.5" height="70" fill="#030303"/><path d="M426.5 493.6 L434.5 493.6 M430.5 489.6 L430.5 497.6" stroke="#ccc" stroke-width="1.5"/><rect x="509.7" y="358.7" width="48.3" height="29.3" rx="3" fill="#0c0c0c"/><path d="M513.7 364 L513.7 361.6 L555 361.6 L555 364" fill="none" stroke="#2a5a80" stroke-width="1.3"/><rect x="516" y="365" width="8.3" height="20" fill="#1e1e1e"/><rect x="526.5" y="365" width="8.3" height="20" fill="#1e1e1e"/><rect x="537" y="365" width="8.3" height="20" fill="#1e1e1e"/><rect x="510.2" y="391.5" width="46.5" height="60" rx="3" fill="#141414"/><rect x="510.2" y="440" width="46.5" height="111.4" rx="3" fill="#141414"/><path d="M566.4 455.5 L574.4 455.5 M570.4 451.5 L570.4 459.5" stroke="#3a78a8" stroke-width="1.6"/><path d="M740.8 455.2 L748.8 455.2 M744.8 451.2 L744.8 459.2" stroke="#3a78a8" stroke-width="1.6"/></svg>
<div class="txt" style="left:358.6px;top:364.5px;font-size:11px;color:#e07a10;transform:scaleX(0.87);transform-origin:0 0;">1 - VibratoSus Flute...</div>
<div class="txt" style="left:384.5px;top:389.0px;font-size:11px;color:#e6e6e6;transform:scaleX(0.87);transform-origin:0 0;">VibratoSus Flute So...</div>
<div class="txt" style="left:384.5px;top:414.6px;font-size:11px;color:#e6e6e6;transform:scaleX(0.87);transform-origin:0 0;">FortePiano Flute So...</div>
<div class="txt" style="left:384.5px;top:440.2px;font-size:11px;color:#e6e6e6;transform:scaleX(0.87);transform-origin:0 0;">Sforzando Flute Sol...</div>
<div class="txt" style="left:384.5px;top:465.8px;font-size:11px;color:#e6e6e6;transform:scaleX(0.87);transform-origin:0 0;">Staccato Flute Solo ...</div>
<div class="txt" style="left:434.20000000000005px;width:200px;text-align:center;top:369px;font-size:9.5px;color:#e8e8e8;-webkit-text-stroke:0.2px #e8e8e8">FX</div>
<div class="abs" style="left:0px;top:561.4px;width:510px;height:3.6px;background:#3a3a3a"></div>
<div class="abs" style="left:0px;top:565px;width:1024px;height:3px;background:#4e4e4e"></div>
<svg style="left:0px;top:0px" width="1024" height="568" viewBox="0 0 1024 568"><defs><linearGradient id="eq2c" x1="607" x2="733" gradientUnits="userSpaceOnUse"><stop offset="0" stop-color="#801010"/><stop offset="0.2" stop-color="#c01818"/><stop offset="0.3" stop-color="#e06010"/><stop offset="0.42" stop-color="#f0c010"/><stop offset="0.55" stop-color="#a0d020"/><stop offset="0.65" stop-color="#30c030"/><stop offset="0.72" stop-color="#20c0a0"/><stop offset="0.8" stop-color="#1aa0e0"/><stop offset="1" stop-color="#1aa0e0"/></linearGradient><linearGradient id="eq5c" x1="847" x2="1024" gradientUnits="userSpaceOnUse"><stop offset="0" stop-color="#2a1a30"/><stop offset="0.15" stop-color="#6a1a28"/><stop offset="0.45" stop-color="#c02030"/><stop offset="0.62" stop-color="#e08020"/><stop offset="0.72" stop-color="#e0c020"/><stop offset="0.82" stop-color="#a0e020"/><stop offset="0.92" stop-color="#20d040"/><stop offset="1" stop-color="#20b0a0"/></linearGradient></defs><rect x="580.2" y="355.8" width="154" height="197" rx="5" fill="#262626"/><rect x="607.5" y="358.5" width="124.8" height="192.3" rx="2" fill="#070707"/><rect x="610.7" y="358.5" width="1" height="117.5" fill="#121212"/><rect x="617.5" y="358.5" width="1" height="117.5" fill="#121212"/><rect x="622.3" y="358.5" width="1" height="117.5" fill="#121212"/><rect x="626.1" y="358.5" width="1" height="117.5" fill="#121212"/><rect x="629.2" y="358.5" width="1" height="117.5" fill="#121212"/><rect x="631.8" y="358.5" width="1" height="117.5" fill="#121212"/><rect x="634.0" y="358.5" width="1" height="117.5" fill="#121212"/><rect x="636.0" y="358.5" width="1" height="117.5" fill="#121212"/><rect x="637.8" y="358.5" width="1" height="117.5" fill="#303030"/><rect x="649.4" y="358.5" width="1" height="117.5" fill="#121212"/><rect x="656.2" y="358.5" width="1" height="117.5" fill="#121212"/><rect x="661.0" y="358.5" width="1" height="117.5" fill="#121212"/><rect x="664.8" y="358.5" width="1" height="117.5" fill="#121212"/><rect x="667.9" y="358.5" width="1" height="117.5" fill="#121212"/><rect x="670.5" y="358.5" width="1" height="117.5" fill="#121212"/><rect x="672.7" y="358.5" width="1" height="117.5" fill="#121212"/><rect x="674.7" y="358.5" width="1" height="117.5" fill="#121212"/><rect x="676.5" y="358.5" width="1" height="117.5" fill="#303030"/><rect x="688.1" y="358.5" width="1" height="117.5" fill="#121212"/><rect x="694.9" y="358.5" width="1" height="117.5" fill="#121212"/><rect x="699.7" y="358.5" width="1" height="117.5" fill="#121212"/><rect x="703.5" y="358.5" width="1" height="117.5" fill="#121212"/><rect x="706.6" y="358.5" width="1" height="117.5" fill="#121212"/><rect x="709.2" y="358.5" width="1" height="117.5" fill="#121212"/><rect x="711.4" y="358.5" width="1" height="117.5" fill="#121212"/><rect x="713.4" y="358.5" width="1" height="117.5" fill="#121212"/><rect x="715.2" y="358.5" width="1" height="117.5" fill="#303030"/><rect x="726.8" y="358.5" width="1" height="117.5" fill="#121212"/><rect x="607.5" y="372.9" width="124.79999999999995" height="1" fill="#171717"/><rect x="607.5" y="395.8" width="124.79999999999995" height="1" fill="#171717"/><rect x="607.5" y="418.8" width="124.79999999999995" height="1" fill="#171717"/><rect x="607.5" y="441.9" width="124.79999999999995" height="1" fill="#171717"/><rect x="607.5" y="465.0" width="124.79999999999995" height="1" fill="#171717"/><path d="M607.5 419.3 L684 419.3 C692 419.3 693 421.8 701 421.8 L732.3 421.8" fill="none" stroke="url(#eq2c)" stroke-width="2"/><path d="M683 419.3 C693 419.3 693 431 704 431 L732.3 431" fill="none" stroke="#6aaee0" stroke-width="2"/><path d="M712 431 L732.3 431" fill="none" stroke="#c8c8c8" stroke-width="2"/><circle cx="700.2" cy="421.8" r="2" fill="#1aa0e0"/><circle cx="633.6" cy="419.6" r="4.6" fill="#fff" stroke="#222" stroke-width="0.6"/><circle cx="700.2" cy="431" r="5" fill="#fff" stroke="#222" stroke-width="0.6"/><g fill="none" stroke="#e86010" stroke-width="1.6"><path d="M589.9 364.6 A4 4 0 1 0 595.3 364.6"/><line x1="592.6" y1="362.6" x2="592.6" y2="367.5"/></g><path d="M587.6 383 L591 383 L592 384 L597.6 384 L597.6 391.5 L587.6 391.5 Z" fill="#a0a0a0"/><circle cx="589.3" cy="527.5" r="1.1" fill="#bbb"/><circle cx="589.3" cy="531.0" r="1.1" fill="#bbb"/><circle cx="592.5999999999999" cy="527.5" r="1.1" fill="#bbb"/><circle cx="592.5999999999999" cy="531.0" r="1.1" fill="#bbb"/><circle cx="595.9" cy="527.5" r="1.1" fill="#bbb"/><circle cx="595.9" cy="531.0" r="1.1" fill="#bbb"/><circle cx="590" cy="544.9" r="2" fill="none" stroke="#ddd" stroke-width="1.1"/><rect x="592" y="544.3" width="4" height="1.2" fill="#ddd"/><path d="M595 542.5 L598.5 544.9 L595 547.3 Z" fill="#ddd"/><path d="M639.6 486.9 L643.1 483.6 L646.6 486.9 L643.1 490.2 Z M637.2 486.9 L639.6 486.9 M646.6 486.9 L649 486.9" fill="none" stroke="#e02020" stroke-width="1.1"/><path d="M661.7 485.4 L665.9 485.4 L663.8 487.8 Z" fill="#e02020"/><path d="M700.3 486.9 L704 486.9 C706 486.9 707 484 710.9 483.4 M704 486.9 C706 486.9 707 489.5 710.9 490.4" fill="none" stroke="#5aa8e0" stroke-width="1.2"/><path d="M723.5 485.4 L727.7 485.4 L725.6 487.8 Z" fill="#5aa8e0"/><rect x="614.4" y="500.2" width="2.2" height="9.5" fill="#1e1e1e"/><rect x="614.4" y="518.2" width="2.2" height="9.5" fill="#1e1e1e"/><rect x="614.4" y="536.2" width="2.2" height="9.5" fill="#1e1e1e"/><rect x="614.4" y="525.5" width="2.2" height="2.2" fill="#e02020"/><rect x="614.4" y="542.5" width="2.2" height="3.2" fill="#e02020"/><rect x="676" y="500.2" width="2.2" height="9.5" fill="#1e1e1e"/><rect x="676" y="518.2" width="2.2" height="9.5" fill="#1e1e1e"/><rect x="676" y="536.2" width="2.2" height="9.5" fill="#1e1e1e"/><rect x="676" y="504" width="2.2" height="1.6" fill="#40b0f0"/><rect x="676" y="519.2" width="2.2" height="8.5" fill="#40b0f0"/><rect x="676" y="542" width="2.2" height="3.7" fill="#504070"/><rect x="754.3" y="355.3" width="290" height="200" rx="5" fill="#2c2c2c"/><rect x="754.3" y="355.3" width="25" height="200" rx="5" fill="#262626"/><rect x="781.8" y="358.5" width="62.3" height="62.3" rx="3" fill="#121212"/><rect x="781.8" y="424" width="62.3" height="62" rx="3" fill="#212121"/><rect x="781.8" y="490" width="62.3" height="62" rx="3" fill="#212121"/><path d="M808.4 455 L817.4 455 M812.9 450.5 L812.9 459.5" stroke="#bbb" stroke-width="1.6"/><path d="M808.4 521 L817.4 521 M812.9 516.5 L812.9 525.5" stroke="#bbb" stroke-width="1.6"/><rect x="807.8" y="362.7" width="10.5" height="10.5" fill="#fff"/><rect x="810.8" y="362.7" width="1" height="10.5" fill="#131313"/><rect x="814.3" y="362.7" width="1" height="10.5" fill="#131313"/><rect x="809.4" y="362.7" width="1.6" height="6" fill="#131313"/><rect x="812.9" y="362.7" width="1.6" height="6" fill="#131313"/><rect x="816.4" y="362.7" width="1.6" height="6" fill="#131313"/><path d="M800.4 367.7 L803.4 365.4 L803.4 370 Z" fill="#ddd"/><path d="M825.6 367.7 L822.6 365.4 L822.6 370 Z" fill="#ddd"/><line x1="781.8" y1="395.4" x2="844" y2="383.4" stroke="#c8101a" stroke-width="1.5"/><circle cx="835.6" cy="386.3" r="2.1" fill="#fff" stroke="#c8101a" stroke-width="0.8"/><circle cx="808.2" cy="413.4" r="3.1" fill="#5ad0f8"/><rect x="808.2" y="412.7" width="10" height="1.4" fill="#5ad0f8"/><path d="M816.7 410.09999999999997 L821.2 413.4 L816.7 416.7 Z" fill="#5ad0f8"/><g fill="none" stroke="#e86010" stroke-width="1.6"><path d="M763.6 365 A4 4 0 1 0 769 365"/><line x1="766.3" y1="363" x2="766.3" y2="367.9"/></g><path d="M761.3 383 L764.7 383 L765.7 384 L771.3 384 L771.3 391.5 L761.3 391.5 Z" fill="#a0a0a0"/><rect x="760.5" y="507" width="11" height="9.5" rx="1.5" fill="none" stroke="#ddd" stroke-width="1.4"/><rect x="760.5" y="507" width="11" height="3" fill="#ddd"/><circle cx="763.0" cy="527.5" r="1.1" fill="#bbb"/><circle cx="763.0" cy="531.0" r="1.1" fill="#bbb"/><circle cx="766.3" cy="527.5" r="1.1" fill="#bbb"/><circle cx="766.3" cy="531.0" r="1.1" fill="#bbb"/><circle cx="769.6" cy="527.5" r="1.1" fill="#bbb"/><circle cx="769.6" cy="531.0" r="1.1" fill="#bbb"/><circle cx="763.5" cy="544.9" r="2" fill="#e86010"/><rect x="763.5" y="544.3" width="6" height="1.2" fill="#e86010"/><path d="M768.5 542.5 L772 544.9 L768.5 547.3 Z" fill="#e86010"/><rect x="847.4" y="358.5" width="180" height="193.8" rx="2" fill="#060606"/><rect x="854.3" y="358.5" width="1" height="119.80000000000001" fill="#121212"/><rect x="871.7" y="358.5" width="1" height="119.80000000000001" fill="#121212"/><rect x="884.1" y="358.5" width="1" height="119.80000000000001" fill="#121212"/><rect x="893.7" y="358.5" width="1" height="119.80000000000001" fill="#121212"/><rect x="901.5" y="358.5" width="1" height="119.80000000000001" fill="#121212"/><rect x="908.1" y="358.5" width="1" height="119.80000000000001" fill="#121212"/><rect x="913.8" y="358.5" width="1" height="119.80000000000001" fill="#121212"/><rect x="918.9" y="358.5" width="1" height="119.80000000000001" fill="#121212"/><rect x="923.4" y="358.5" width="1" height="119.80000000000001" fill="#303030"/><rect x="953.2" y="358.5" width="1" height="119.80000000000001" fill="#121212"/><rect x="970.6" y="358.5" width="1" height="119.80000000000001" fill="#121212"/><rect x="983.0" y="358.5" width="1" height="119.80000000000001" fill="#121212"/><rect x="992.6" y="358.5" width="1" height="119.80000000000001" fill="#121212"/><rect x="1000.4" y="358.5" width="1" height="119.80000000000001" fill="#121212"/><rect x="1007.0" y="358.5" width="1" height="119.80000000000001" fill="#121212"/><rect x="1012.7" y="358.5" width="1" height="119.80000000000001" fill="#121212"/><rect x="1017.8" y="358.5" width="1" height="119.80000000000001" fill="#121212"/><rect x="1022.3" y="358.5" width="1" height="119.80000000000001" fill="#303030"/><rect x="847.4" y="372.7" width="176.60000000000002" height="1" fill="#171717"/><rect x="847.4" y="394.9" width="176.60000000000002" height="1" fill="#171717"/><rect x="847.4" y="418.2" width="176.60000000000002" height="1" fill="#171717"/><rect x="847.4" y="441.4" width="176.60000000000002" height="1" fill="#171717"/><rect x="847.4" y="463.6" width="176.60000000000002" height="1" fill="#171717"/><rect x="847.4" y="417.9" width="177" height="1.7" fill="url(#eq5c)"/><circle cx="964.7" cy="418.7" r="5" fill="#fff" stroke="#222" stroke-width="0.6"/><circle cx="993.8" cy="418.7" r="5" fill="#fff" stroke="#222" stroke-width="0.6"/><circle cx="1022" cy="418.7" r="5" fill="#fff" stroke="#222" stroke-width="0.6"/><path d="M878.5 486.9 L882.0 483.6 L885.5 486.9 L882.0 490.2 Z M876.1 486.9 L878.5 486.9 M885.5 486.9 L887.9 486.9" fill="none" stroke="#e0b020" stroke-width="1.1"/><path d="M901.3 485.4 L905.5 485.4 L903.4 487.8 Z" fill="#e0b020"/><path d="M940.8 486.9 L944.3 483.6 L947.8 486.9 L944.3 490.2 Z M938.4 486.9 L940.8 486.9 M947.8 486.9 L950.1999999999999 486.9" fill="none" stroke="#90d020" stroke-width="1.1"/><path d="M962.9 485.4 L967.1 485.4 L965.0 487.8 Z" fill="#90d020"/><path d="M1002 486.9 L1005.5 483.6 L1009 486.9 L1005.5 490.2 Z M999.6 486.9 L1002 486.9 M1009 486.9 L1011.4 486.9" fill="none" stroke="#30d040" stroke-width="1.1"/><rect x="857" y="500.2" width="2.2" height="9.5" fill="#1e1e1e"/><rect x="857" y="518.2" width="2.2" height="9.5" fill="#1e1e1e"/><rect x="857" y="536.2" width="2.2" height="9.5" fill="#1e1e1e"/><rect x="857" y="504.5" width="2.2" height="1.2" fill="#2a4a60"/><rect x="857" y="519" width="2.2" height="4.2" fill="#40b0f0"/><rect x="857" y="523.2" width="2.2" height="4.5" fill="#e0b020"/><rect x="857" y="541.5" width="2.2" height="4.2" fill="#e0b020"/><rect x="919.4" y="500.2" width="2.2" height="9.5" fill="#1e1e1e"/><rect x="919.4" y="518.2" width="2.2" height="9.5" fill="#1e1e1e"/><rect x="919.4" y="536.2" width="2.2" height="9.5" fill="#1e1e1e"/><rect x="919.4" y="504.5" width="2.2" height="1.2" fill="#2a4a60"/><rect x="919.4" y="519" width="2.2" height="4.2" fill="#40b0f0"/><rect x="919.4" y="523.2" width="2.2" height="4.5" fill="#60d020"/><rect x="919.4" y="541.5" width="2.2" height="4.2" fill="#60d020"/><rect x="981" y="500.2" width="2.2" height="9.5" fill="#1e1e1e"/><rect x="981" y="518.2" width="2.2" height="9.5" fill="#1e1e1e"/><rect x="981" y="536.2" width="2.2" height="9.5" fill="#1e1e1e"/><rect x="981" y="504.5" width="2.2" height="1.2" fill="#2a4a60"/><rect x="981" y="519" width="2.2" height="4.2" fill="#40b0f0"/><rect x="981" y="523.2" width="2.2" height="4.5" fill="#30d040"/><rect x="981" y="541.5" width="2.2" height="4.2" fill="#30d040"/></svg>
<div class="txt" style="left:612px;top:364.5px;font-size:9.5px;color:#8a8a8a;transform:scaleX(0.9);transform-origin:0 0;">20</div>
<div class="txt" style="left:639.8px;top:364.5px;font-size:9.5px;color:#8a8a8a;transform:scaleX(0.9);transform-origin:0 0;">100</div>
<div class="txt" style="left:679.6px;top:364.5px;font-size:9.5px;color:#8a8a8a;transform:scaleX(0.9);transform-origin:0 0;">1k</div>
<div class="txt" style="left:717.5px;top:364.5px;font-size:9.5px;color:#8a8a8a;transform:scaleX(0.9);transform-origin:0 0;">10k</div>
<div class="txt" style="left:856.5px;top:364.5px;font-size:9.5px;color:#8a8a8a;transform:scaleX(0.9);transform-origin:0 0;">20</div>
<div class="txt" style="left:925.6px;top:364.5px;font-size:9.5px;color:#8a8a8a;transform:scaleX(0.9);transform-origin:0 0;">100</div>
<div class="txt" style="right:297px;top:369.5px;font-size:9.5px;color:#8a8a8a;transform:scaleX(0.9);transform-origin:100% 0">+20</div>
<div class="txt" style="right:297px;top:392.5px;font-size:9.5px;color:#8a8a8a;transform:scaleX(0.9);transform-origin:100% 0">+10</div>
<div class="txt" style="right:297px;top:438px;font-size:9.5px;color:#8a8a8a;transform:scaleX(0.9);transform-origin:100% 0">-10</div>
<div class="txt" style="right:297px;top:462px;font-size:9.5px;color:#8a8a8a;transform:scaleX(0.9);transform-origin:100% 0">-20</div>
<div class="txt" style="left:616.9px;top:482px;font-size:11px;color:#e02020;transform:scaleX(0.9);transform-origin:0 0;">Lo</div>
<div class="txt" style="left:679.8px;top:482px;font-size:11px;color:#5aa8e0;transform:scaleX(0.9);transform-origin:0 0;">Hi</div>
<div class="txt" style="right:361.29999999999995px;top:501px;font-size:11px;color:#e02828;transform:scaleX(0.9);transform-origin:100% 0">0.0 dB</div>
<div class="txt" style="right:361.29999999999995px;top:519px;font-size:11px;color:#e02828;transform:scaleX(0.9);transform-origin:100% 0">80.0 Hz</div>
<div class="txt" style="right:362.79999999999995px;top:537px;font-size:11px;color:#e02828;transform:scaleX(0.9);transform-origin:100% 0">0.71</div>
<div class="txt" style="right:300.5px;top:501px;font-size:11px;color:#6aaee0;transform:scaleX(0.9);transform-origin:100% 0">&minus;5.0 dB</div>
<div class="txt" style="right:300.5px;top:519px;font-size:11px;color:#8ac4ea;transform:scaleX(0.9);transform-origin:100% 0">4.08 kHz</div>
<div class="txt" style="right:300.5px;top:537px;font-size:11px;color:#607080;transform:scaleX(0.9);transform-origin:100% 0">0.71</div>
<div class="txt" style="left:861px;top:481px;font-size:11px;color:#e0b020;font-weight:bold">1</div>
<div class="txt" style="left:922.5px;top:481px;font-size:11px;color:#90d020;font-weight:bold">2</div>
<div class="txt" style="left:984px;top:481px;font-size:11px;color:#30d040;font-weight:bold">3</div>
<div class="txt" style="right:122px;top:501px;font-size:11px;color:#d8b030;transform:scaleX(0.9);transform-origin:100% 0">0.0 dB</div>
<div class="txt" style="right:122px;top:519px;font-size:11px;color:#d8b030;transform:scaleX(0.9);transform-origin:100% 0">260 Hz</div>
<div class="txt" style="right:122px;top:537px;font-size:11px;color:#d8b030;transform:scaleX(0.9);transform-origin:100% 0">1.00</div>
<div class="txt" style="right:60px;top:501px;font-size:11px;color:#a0d030;transform:scaleX(0.9);transform-origin:100% 0">0.0 dB</div>
<div class="txt" style="right:60px;top:519px;font-size:11px;color:#a0d030;transform:scaleX(0.9);transform-origin:100% 0">520 Hz</div>
<div class="txt" style="right:60px;top:537px;font-size:11px;color:#a0d030;transform:scaleX(0.9);transform-origin:100% 0">1.44</div>
<div class="txt" style="left:997.4px;top:501px;font-size:11px;color:#40d040;transform:scaleX(0.9);transform-origin:0 0;">0.0 dB</div>
<div class="txt" style="left:986.6px;top:519px;font-size:11px;color:#40d040;transform:scaleX(0.9);transform-origin:0 0;">1.04 kHz</div>
<div class="txt" style="left:1006.4px;top:537px;font-size:11px;color:#40d040;transform:scaleX(0.9);transform-origin:0 0;">1.53</div>
<div class="txt" style="left:533.6px;width:200px;text-align:center;top:416.0px;font-size:8px;color:#222;font-weight:bold">L</div>
<div class="txt" style="left:600.2px;width:200px;text-align:center;top:427.4px;font-size:8px;color:#222;font-weight:bold">H</div>
<div class="txt" style="left:864.7px;width:200px;text-align:center;top:415.09999999999997px;font-size:8px;color:#222;font-weight:bold">1</div>
<div class="txt" style="left:893.8px;width:200px;text-align:center;top:415.09999999999997px;font-size:8px;color:#222;font-weight:bold">2</div>
<div class="txt" style="left:922px;width:200px;text-align:center;top:415.09999999999997px;font-size:8px;color:#222;font-weight:bold">3</div>
<div class="txt" style="left:588px;top:466px;font-size:10.5px;color:#e8e8e8;transform:rotate(-90deg) scaleX(0.9);transform-origin:0 0;">EQ-2</div>
<div class="txt" style="left:762px;top:466px;font-size:10.5px;color:#e8e8e8;transform:rotate(-90deg) scaleX(0.9);transform-origin:0 0;">EQ-5</div>
</body></html>
